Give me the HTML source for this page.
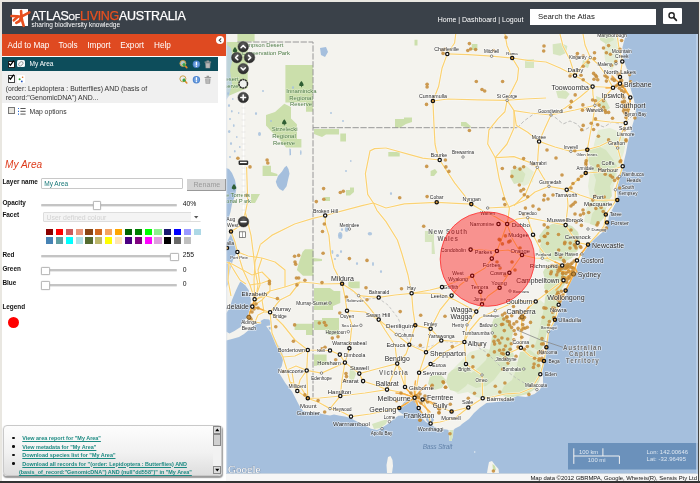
<!DOCTYPE html>
<html><head><meta charset="utf-8"><title>Atlas of Living Australia - Spatial Portal</title>
<style>
html,body{margin:0;padding:0}
body{width:700px;height:483px;overflow:hidden;position:relative;background:#e9e7e1;font-family:"Liberation Sans",sans-serif}
#wrap{position:absolute;left:0;top:0;width:700px;height:483px;transform:translateZ(0);will-change:transform}
.abs{position:absolute}
#hdr{left:2px;top:2px;width:696px;height:32px;background:#3a4149}
#nav{left:2px;top:34px;width:224.5px;height:22px;background:#df4a21}
#nav span{position:absolute;top:7.1px;font-size:8.2px;color:#fff;white-space:nowrap}
#panel{left:2px;top:56px;width:224px;height:425px;background:#fff}
.t{position:absolute;white-space:nowrap}
.lbl{font-weight:bold;font-size:6.4px;color:#111}
.track{position:absolute;height:2px;background:#c4c4c4;border-radius:1px;box-shadow:0 1px 0 #e8e8e8}
.hnd{position:absolute;width:6.5px;height:6.5px;background:#fff;border:0.8px solid #bbb;border-radius:1.5px;box-shadow:0 0 1px #999}
#sw i{position:absolute;width:7.2px;height:6.8px;display:block}
.lnk{position:absolute;font-size:5.45px;font-weight:bold;color:#1b8a82;text-decoration:underline;white-space:nowrap}
.bul{position:absolute;width:2.6px;height:2.6px;border-radius:50%;background:#111;left:12.4px}
</style></head><body><div id="wrap">
<div class="abs" id="hdr"></div>
<!-- logo -->
<div class="abs" style="left:11.5px;top:9px;width:16.5px;height:16.7px;background:#fff"></div>
<svg class="abs" style="left:0;top:0" width="40" height="34" viewBox="0 0 40 34"><g fill="none" stroke="#e8501f" stroke-width="2.6" stroke-linecap="round" stroke-linejoin="round"><path d="M21.1 11L21.4 16.7L29.4 12.3"/><path d="M21.4 16.7L17 16.3L11.5 16"/><path d="M17.8 16.8L13.8 20.3"/><path d="M21.4 16.7L19.6 21L16.3 22.9"/><path d="M21.4 16.7L22.5 22L23.7 25.8"/></g></svg>
<div class="t" style="left:31.5px;top:9.9px;font-size:12.5px;color:#fff;letter-spacing:-0.33px;line-height:13px;-webkit-text-stroke:0.25px #fff"><span>ATLAS</span><span style="font-size:8.2px;letter-spacing:0">OF</span><span style="color:#e8501f;-webkit-text-stroke:0.25px #e8501f">LIVING</span><span>AUSTRALIA</span></div>
<div class="t" style="left:31.5px;top:20.8px;font-size:6.5px;color:#fff;line-height:8px">sharing biodiversity knowledge</div>
<div class="t" style="left:437.7px;top:14.6px;font-size:7px;color:#fff;line-height:10px">Home | Dashboard | Logout</div>
<div class="abs" style="left:529.7px;top:8.6px;width:126.5px;height:16px;background:#fff"></div>
<div class="t" style="left:538px;top:11.8px;font-size:7.8px;color:#222;line-height:10px">Search the Atlas</div>
<div class="abs" style="left:663px;top:8.2px;width:19px;height:15.4px;background:#fff;border-radius:1px"></div>
<svg class="abs" style="left:667px;top:10.5px" width="12" height="12" viewBox="0 0 12 12"><circle cx="4.6" cy="4.4" r="2.6" fill="none" stroke="#222" stroke-width="1.4"/><path d="M6.6 6.4L9.4 9.4" stroke="#222" stroke-width="1.7" stroke-linecap="round"/></svg>

<div class="abs" id="nav"><span style="left:5.5px">Add to Map</span><span style="left:56.5px">Tools</span><span style="left:85.3px">Import</span><span style="left:118.3px">Export</span><span style="left:152px">Help</span></div>
<div class="abs" id="panel"></div>
<!-- collapse button -->
<div class="abs" style="left:215.6px;top:35.6px;width:8.6px;height:8.6px;border-radius:50%;background:#fff"></div>
<svg class="abs" style="left:215.6px;top:35.6px" width="9" height="9" viewBox="0 0 9 9"><path d="M5.2 2.4L3.2 4.3L5.2 6.2" fill="none" stroke="#444" stroke-width="1.1"/></svg>

<!-- layer rows -->
<div class="abs" style="left:2px;top:57px;width:216px;height:14px;background:#0d4d5b"></div>
<div class="abs" style="left:2px;top:71px;width:216px;height:32px;background:#f0f0f0"></div>
<div class="abs" style="left:7.6px;top:60.6px;width:5.6px;height:5.6px;background:#fff;border:0.8px solid #222"></div>
<svg class="abs" style="left:7px;top:59px" width="9" height="9" viewBox="0 0 9 9"><path d="M1.8 4.4L3.4 6.2L6.8 1.6" fill="none" stroke="#000" stroke-width="1.3"/></svg>
<div class="abs" style="left:17.4px;top:60px;width:7.4px;height:7.4px;background:#f4f8fa;border-radius:1.5px"></div>
<svg class="abs" style="left:17.4px;top:60px" width="8" height="8" viewBox="0 0 8 8"><ellipse cx="3.8" cy="3.8" rx="2.6" ry="1.7" transform="rotate(-45 3.8 3.8)" fill="none" stroke="#777" stroke-width="0.7"/></svg>
<div class="t" style="left:29.5px;top:60.2px;font-size:6.55px;color:#fff;line-height:8px">My Area</div>

<div class="abs" style="left:7.6px;top:75px;width:5.6px;height:5.6px;background:#fff;border:0.8px solid #444"></div>
<svg class="abs" style="left:7px;top:73.4px" width="9" height="9" viewBox="0 0 9 9"><path d="M1.8 4.4L3.4 6.2L6.8 1.6" fill="none" stroke="#000" stroke-width="1.3"/></svg>
<div class="abs" style="left:17.4px;top:75px;width:7.6px;height:8px;background:#fff;border-radius:1px"></div>
<svg class="abs" style="left:17.4px;top:75px" width="8" height="9" viewBox="0 0 8 9"><circle cx="2.6" cy="4.2" r="1" fill="#2a9d2a"/><circle cx="5.6" cy="2.2" r="0.8" fill="#e07020"/><circle cx="4.8" cy="6.4" r="0.9" fill="#2050c0"/></svg>
<div class="t" style="left:5.8px;top:85.3px;font-size:6.9px;color:#333;line-height:8.4px;white-space:normal;width:152px">(order: Lepidoptera : Butterflies) AND (basis of record:"GenomicDNA") AND...</div>

<svg class="abs" style="left:176px;top:57px" width="40" height="32" viewBox="0 0 40 32">
 <g id="ic">
 <circle cx="6.9" cy="6.4" r="3" fill="#e9edf0" fill-opacity="0.75" stroke="#c79a3c" stroke-width="0.9"/><path d="M9 8.6L10.8 10.6" stroke="#e08a2a" stroke-width="1.6" stroke-linecap="round"/><path d="M6.2 7.6L8.2 5.6L10 8.6L7.6 9.6Z" fill="#3aa544"/>
 <circle cx="20.4" cy="7.3" r="3.7" fill="#4d84cf"/><circle cx="20.4" cy="7.3" r="2.6" fill="#6fa0e0"/><rect x="19.8" y="4.8" width="1.2" height="3.4" fill="#fff"/><rect x="19.8" y="8.7" width="1.2" height="1.1" fill="#fff"/>
 <path d="M28.6 4.6H35.1V5.7H28.6ZM30.6 3.4H33.1V4.6H30.6ZM29.2 6.1H34.5L34.1 11.3H29.6Z" fill="#9a9a9a"/><path d="M30.8 6.6V10.8M31.85 6.6V10.8M32.9 6.6V10.8" stroke="#e4e4e4" stroke-width="0.5"/>
 </g>
 <use href="#ic" y="15.4"/>
</svg>

<!-- map options -->
<div class="abs" style="left:7.6px;top:106.6px;width:5.6px;height:5.6px;background:#e8e6e0;border:0.8px solid #777"></div>
<svg class="abs" style="left:17px;top:107px" width="10" height="9" viewBox="0 0 10 9"><path d="M1 1.5H2M1 4.3H2M1 7.1H2" stroke="#2a6ad0" stroke-width="1.2"/><path d="M3.4 1.5H8.6M3.4 4.3H8.6M3.4 7.1H8.6" stroke="#444" stroke-width="0.9"/></svg>
<div class="t" style="left:29.5px;top:107.8px;font-size:6.8px;color:#333;line-height:8px">Map options</div>

<!-- My Area heading -->
<div class="t" style="left:5px;top:158.6px;font-size:10.1px;font-style:italic;color:#dd3a1a;line-height:12px">My Area</div>
<div class="t lbl" style="left:2.4px;top:178.3px;line-height:8px">Layer name</div>
<div class="abs" style="left:41.4px;top:178.3px;width:142px;height:10.4px;border:0.8px solid #c8c8c8;background:#fff;box-sizing:border-box;border-radius:1px"></div>
<div class="t" style="left:44.2px;top:180.2px;font-size:6.55px;color:#187878;line-height:8px">My Area</div>
<div class="abs" style="left:187.3px;top:178.9px;width:38.5px;height:11.7px;background:#d4d4d4;border-right:1px solid #999;border-bottom:1px solid #999;box-sizing:border-box"></div>
<div class="t" style="left:193.5px;top:180.8px;font-size:7.1px;color:#9a9a9a;line-height:9px">Rename</div>
<div class="t lbl" style="left:2.4px;top:198.6px;line-height:8px">Opacity</div>
<div class="track" style="left:41.4px;top:203.8px;width:136px"></div>
<div class="hnd" style="left:92.6px;top:201px"></div>
<div class="t" style="left:182.7px;top:198.6px;font-size:6.8px;color:#111;line-height:9px">40%</div>
<div class="t lbl" style="left:2.4px;top:211.4px;line-height:8px">Facet</div>
<div class="abs" style="left:43.2px;top:211.5px;width:158px;height:10.8px;border:0.8px solid #ddd;background:#f4f4f4;box-sizing:border-box;border-radius:1px"></div>
<div class="abs" style="left:191px;top:212.3px;width:9.6px;height:9.2px;background:#fff"></div>
<svg class="abs" style="left:193px;top:214.6px" width="7" height="5" viewBox="0 0 7 5"><path d="M1 1L3.2 3.6L5.4 1Z" fill="#555"/></svg>
<div class="t" style="left:46.6px;top:212.6px;font-size:6.9px;color:#d2d2d2;line-height:9px">User defined colour</div>
<div id="sw"><i style="left:46.00px;top:228.6px;background:#8b0000"></i><i style="left:55.85px;top:228.6px;background:#ff0000"></i><i style="left:65.70px;top:228.6px;background:#cd5c5c"></i><i style="left:75.55px;top:228.6px;background:#e9967a"></i><i style="left:85.40px;top:228.6px;background:#8b4513"></i><i style="left:95.25px;top:228.6px;background:#d2691e"></i><i style="left:105.10px;top:228.6px;background:#f4a460"></i><i style="left:114.95px;top:228.6px;background:#ffa500"></i><i style="left:124.80px;top:228.6px;background:#006400"></i><i style="left:134.65px;top:228.6px;background:#008000"></i><i style="left:144.50px;top:228.6px;background:#00ff00"></i><i style="left:154.35px;top:228.6px;background:#90ee90"></i><i style="left:164.20px;top:228.6px;background:#191970"></i><i style="left:174.05px;top:228.6px;background:#0000ff"></i><i style="left:183.90px;top:228.6px;background:#9999ff"></i><i style="left:193.75px;top:228.6px;background:#add8e6"></i><i style="left:46.00px;top:236.8px;background:#4682b4"></i><i style="left:55.85px;top:236.8px;background:#5f9ea0"></i><i style="left:65.70px;top:236.8px;background:#00ffff"></i><i style="left:75.55px;top:236.8px;background:#b0e0e6"></i><i style="left:85.40px;top:236.8px;background:#556b2f"></i><i style="left:95.25px;top:236.8px;background:#bdb76b"></i><i style="left:105.10px;top:236.8px;background:#ffff00"></i><i style="left:114.95px;top:236.8px;background:#ffe4b5"></i><i style="left:124.80px;top:236.8px;background:#4b0082"></i><i style="left:134.65px;top:236.8px;background:#800080"></i><i style="left:144.50px;top:236.8px;background:#ff00ff"></i><i style="left:154.35px;top:236.8px;background:#dda0dd"></i><i style="left:164.20px;top:236.8px;background:#000000"></i><i style="left:174.05px;top:236.8px;background:#696969"></i><i style="left:183.90px;top:236.8px;background:#c0c0c0"></i></div>
<div class="t lbl" style="left:2.4px;top:250.8px;line-height:8px">Red</div>
<div class="track" style="left:41px;top:255.2px;width:136px"></div>
<div class="hnd" style="left:170.2px;top:252.6px"></div>
<div class="t" style="left:182.8px;top:250.2px;font-size:6.8px;color:#111;line-height:9px">255</div>
<div class="t lbl" style="left:2.4px;top:264.9px;line-height:8px">Green</div>
<div class="track" style="left:41px;top:269.4px;width:136px"></div>
<div class="hnd" style="left:41px;top:266.8px"></div>
<div class="t" style="left:182.8px;top:264.6px;font-size:6.8px;color:#111;line-height:9px">0</div>
<div class="t lbl" style="left:2.4px;top:279.4px;line-height:8px">Blue</div>
<div class="track" style="left:41px;top:283.8px;width:136px"></div>
<div class="hnd" style="left:41px;top:281.2px"></div>
<div class="t" style="left:182.8px;top:279px;font-size:6.8px;color:#111;line-height:9px">0</div>
<div class="t lbl" style="left:2.4px;top:302.6px;line-height:8px">Legend</div>
<div class="abs" style="left:8.1px;top:316.7px;width:11.2px;height:11.2px;border-radius:50%;background:#ff0000"></div>

<!-- links box -->
<div class="abs" style="left:2.7px;top:424.7px;width:219px;height:51px;border:0.8px solid #c9c9c9;border-radius:4px;box-sizing:border-box;background:linear-gradient(#fdfdfd,#f1f1f1 55%,#dedede);box-shadow:0.5px 1.2px 1.2px rgba(0,0,0,0.4)"></div>
<div class="bul" style="top:436.8px"></div><div class="bul" style="top:445.2px"></div><div class="bul" style="top:453.7px"></div><div class="bul" style="top:462.1px"></div>
<div class="lnk" style="left:22.3px;top:434.4px;line-height:8px">View area report for "My Area"</div>
<div class="lnk" style="left:22.3px;top:442.8px;line-height:8px">View metadata for "My Area"</div>
<div class="lnk" style="left:22.3px;top:451.2px;line-height:8px">Download species list for "My Area"</div>
<div class="lnk" style="left:22.3px;top:459.5px;line-height:8px">Download all records for "(order: Lepidoptera : Butterflies) AND</div>
<div class="lnk" style="left:18.9px;top:467.9px;line-height:8px">(basis_of_record:"GenomicDNA") AND (null"dd558")" in "My Area"</div>
<!-- scrollbar -->
<div class="abs" style="left:212.5px;top:425.7px;width:8.6px;height:48.8px;background:#f2f2f2"></div>
<div class="abs" style="left:212.5px;top:425.7px;width:8.6px;height:8.2px;background:#dcdcdc;border:0.6px solid #888;box-sizing:border-box"></div>
<svg class="abs" style="left:212.5px;top:425.7px" width="9" height="8" viewBox="0 0 9 8"><path d="M2.2 5.2L4.3 2.6L6.4 5.2Z" fill="#000"/></svg>
<div class="abs" style="left:212.5px;top:434px;width:8.6px;height:12px;background:#d0d0d0;border:0.6px solid #888;box-sizing:border-box"></div>
<div class="abs" style="left:212.5px;top:466.3px;width:8.6px;height:8.2px;background:#dcdcdc;border:0.6px solid #888;box-sizing:border-box"></div>
<svg class="abs" style="left:212.5px;top:466.3px" width="9" height="8" viewBox="0 0 9 8"><path d="M2.2 2.8L4.3 5.4L6.4 2.8Z" fill="#000"/></svg>

<svg id="map" width="700" height="483" viewBox="0 0 700 483" style="position:absolute;left:0;top:0">
<defs><clipPath id="mc"><rect x="226" y="34" width="472" height="439.6"/></clipPath><radialGradient id="btn" cx="50%" cy="35%" r="65%"><stop offset="0" stop-color="#666"/><stop offset="1" stop-color="#222"/></radialGradient></defs>
<g clip-path="url(#mc)">
<rect x="226" y="34" width="472" height="440" fill="#a5bfdd"/>
<polygon points="226.0,34.0 626.0,34.0 622.5,47.0 623.0,56.0 625.0,64.0 628.5,73.0 629.0,82.0 631.0,90.0 633.6,98.0 636.0,110.0 634.5,118.0 632.0,127.0 629.5,136.0 627.6,144.0 626.0,153.0 624.0,161.0 623.0,167.0 619.0,179.0 617.0,190.0 618.0,198.6 613.6,207.0 609.0,216.0 607.6,224.0 604.0,231.0 595.6,238.0 588.7,243.0 585.0,250.0 581.0,259.0 576.7,267.0 575.6,272.0 572.0,278.6 568.0,287.0 566.0,296.0 562.0,301.0 560.0,309.0 556.7,317.0 553.0,322.0 550.0,330.0 547.0,339.0 546.4,347.0 544.8,352.0 544.0,358.6 542.0,367.0 543.0,376.0 543.0,384.0 539.7,390.0 534.5,394.0 526.0,397.0 517.0,396.0 508.7,400.0 496.7,402.0 486.4,403.0 479.5,408.0 474.0,413.0 469.0,419.0 462.0,424.0 460.0,426.0 455.0,428.5 453.5,430.0 453.0,436.0 451.5,441.0 449.5,441.0 449.0,435.0 448.5,430.0 446.5,429.5 438.0,428.7 431.0,425.0 426.0,422.0 423.0,419.0 420.0,417.0 417.0,418.5 413.0,419.0 410.5,418.0 414.0,414.0 417.0,409.0 416.0,403.0 412.0,399.0 408.0,399.0 404.0,402.5 400.0,407.0 398.0,411.0 401.0,413.0 405.0,415.5 398.4,415.8 395.0,418.0 391.5,421.0 387.0,424.5 383.0,427.0 377.0,430.0 371.0,428.7 366.0,426.0 360.6,423.5 355.0,420.5 350.0,418.0 345.0,416.5 340.0,415.8 334.0,414.5 330.0,415.5 327.0,415.0 322.0,414.0 317.0,412.5 310.0,412.0 303.0,411.0 299.0,405.0 296.4,400.0 292.0,391.5 285.3,383.0 281.0,376.0 278.4,372.0 281.8,366.0 283.6,357.0 281.0,348.6 278.0,345.0 275.4,339.7 270.4,332.0 265.5,325.0 261.0,323.0 256.8,324.0 250.0,329.0 244.0,334.0 239.0,337.0 232.0,339.0 226.0,340.5 226.0,331.5 229.5,333.5 234.4,331.0 240.6,327.0 243.0,322.0 248.0,316.0 250.0,308.6 251.0,300.0 248.7,290.0 245.0,285.0 240.6,281.0 238.0,286.0 235.7,291.0 232.0,300.0 229.5,308.6 226.0,313.6" fill="#f4f3ee"/>
<polygon points="388.0,457.0 390.5,456.0 392.5,460.0 393.0,466.0 392.0,473.0 387.0,473.0 386.5,465.0" fill="#f4f3ee"/>
<polygon points="489.0,462.0 492.0,461.0 495.0,465.0 498.5,469.0 499.0,473.0 487.0,473.0 488.0,467.0" fill="#f4f3ee"/>
<polygon points="492.5,464.0 495.0,466.0 496.0,470.0 493.0,471.0" fill="#cbdfab"/>
<circle cx="474.7" cy="452" r="0.8" fill="#e8eef2"/>
<polygon points="414.6,398.5 417.0,402.0 419.0,407.4 421.5,411.0 423.7,415.4 419.0,418.0 413.4,418.4 410.0,418.5 407.7,416.6 405.0,414.0 401.0,412.5 399.5,410.0 402.0,408.5 404.3,409.7 406.5,406.0 408.9,402.9 411.5,400.0" fill="#a5bfdd"/>
<polygon points="426.0,416.0 429.0,415.0 432.5,417.0 434.0,420.0 432.0,423.0 428.0,422.5 426.0,420.0" fill="#a5bfdd"/>
<polygon points="428.5,417.5 431.0,418.0 431.5,420.5 429.0,420.5" fill="#f4f3ee"/>
<polygon points="231.5,233.0 233.0,236.0 235.0,242.0 236.5,248.0 236.0,254.0 233.0,260.0 230.5,268.0 229.0,276.0 228.0,284.0 226.0,288.0 226.0,244.0 228.0,240.0 230.0,236.0" fill="#a5bfdd"/>
<polygon points="470.0,352.0 484.0,348.0 496.0,352.0 506.0,360.0 520.0,362.0 534.0,360.0 541.0,368.0 540.0,380.0 534.0,390.0 522.0,395.0 508.0,397.0 496.0,395.0 486.0,399.0 476.0,397.0 468.0,392.0 458.0,394.0 450.0,388.0 448.0,378.0 454.0,368.0 462.0,360.0" fill="#e4edd6"/>
<polygon points="598.0,130.0 610.0,128.0 620.0,132.0 626.0,140.0 624.0,152.0 620.0,164.0 616.0,178.0 612.0,192.0 608.0,206.0 600.0,216.0 592.0,224.0 584.0,222.0 586.0,210.0 590.0,198.0 588.0,186.0 590.0,172.0 592.0,158.0 594.0,144.0" fill="#e4edd6"/>
<polygon points="606.0,36.0 616.0,36.0 620.0,48.0 618.0,60.0 612.0,70.0 606.0,66.0 604.0,52.0" fill="#e4edd6"/>
<polygon points="515.5,167.0 526.0,166.0 534.0,172.0 533.0,182.0 524.0,186.0 516.0,182.0" fill="#e4edd6"/>
<polygon points="528.0,302.0 540.0,300.0 548.0,306.0 548.0,322.0 544.0,340.0 540.0,356.0 532.0,362.0 526.0,352.0 530.0,336.0 530.0,318.0" fill="#e4edd6"/>
<polygon points="552.6,44.3 561.0,43.0 567.4,46.0 566.0,53.0 560.0,55.7 553.0,54.0" fill="#d6e5bf"/>
<polygon points="556.0,91.0 565.0,90.0 569.7,94.0 566.0,99.0 558.0,98.0" fill="#d6e5bf"/>
<polygon points="600.0,34.0 612.0,34.0 614.0,40.0 606.0,44.0 600.0,40.0" fill="#d6e5bf"/>
<polygon points="583.0,60.0 590.0,62.0 588.0,68.0 582.0,66.0" fill="#d6e5bf"/>
<polygon points="596.0,96.0 606.0,100.0 610.0,108.0 604.0,112.0 598.0,106.0" fill="#d6e5bf"/>
<polygon points="590.0,150.0 598.0,146.0 606.0,150.0 612.0,158.0 617.0,166.0 615.0,176.0 610.0,186.0 612.0,196.0 606.0,204.0 598.0,200.0 594.0,190.0 596.0,180.0 592.0,170.0 588.0,160.0" fill="#d6e5bf"/>
<polygon points="598.0,206.0 606.0,208.0 604.0,218.0 596.0,226.0 590.0,224.0 592.0,214.0" fill="#d6e5bf"/>
<polygon points="510.6,170.0 520.0,168.0 525.4,174.0 523.0,182.0 514.0,184.0 510.6,178.0" fill="#d6e5bf"/>
<polygon points="545.0,228.0 552.0,224.0 562.0,223.0 572.0,226.0 578.0,232.0 580.0,240.0 578.0,250.0 572.0,258.0 564.0,262.0 556.0,260.0 548.0,262.0 541.0,258.0 539.0,250.0 541.0,242.0 539.0,236.0" fill="#d6e5bf"/>
<polygon points="547.0,265.0 556.0,264.0 563.0,268.0 567.0,276.0 565.0,284.0 560.0,292.0 554.0,296.0 548.0,294.0 544.0,288.0 545.0,280.0 543.0,272.0" fill="#d6e5bf"/>
<polygon points="548.0,288.0 556.0,290.0 560.0,300.0 556.0,312.0 551.0,322.0 547.0,332.0 544.0,344.0 540.0,352.0 534.0,348.0 538.0,336.0 541.0,322.0 544.0,308.0 545.0,298.0" fill="#d6e5bf"/>
<polygon points="494.0,318.0 503.0,316.0 510.0,322.0 513.0,332.0 511.0,344.0 514.0,356.0 508.0,366.0 500.0,372.0 494.0,380.0 486.0,386.0 476.0,388.0 468.0,384.0 470.0,374.0 478.0,368.0 486.0,360.0 490.0,348.0 492.0,336.0 491.0,326.0" fill="#d6e5bf"/>
<polygon points="520.0,352.0 530.0,350.0 538.0,356.0 541.0,366.0 540.0,378.0 536.0,388.0 528.0,394.0 518.0,396.0 508.0,398.0 500.0,394.0 504.0,386.0 512.0,380.0 516.0,370.0 518.0,360.0" fill="#d6e5bf"/>
<polygon points="452.0,370.0 462.0,366.0 470.0,370.0 472.0,378.0 466.0,386.0 458.0,392.0 450.0,390.0 446.0,382.0 448.0,374.0" fill="#d6e5bf"/>
<polygon points="430.0,376.0 440.0,374.0 446.0,380.0 442.0,388.0 434.0,390.0 428.0,384.0" fill="#d6e5bf"/>
<polygon points="350.0,368.0 354.0,366.0 356.0,374.0 353.0,382.0 349.0,378.0" fill="#d6e5bf"/>
<polygon points="372.0,424.0 381.0,421.0 388.0,419.0 386.0,424.0 380.0,428.0 374.0,429.0" fill="#d6e5bf"/>
<polygon points="424.9,231.0 434.0,231.0 434.0,242.0 435.0,254.0 431.7,254.0 431.7,242.0 424.9,242.0" fill="#d6e5bf"/>
<polygon points="449.5,430.0 453.0,430.0 453.0,436.0 451.5,441.0 449.5,441.0" fill="#d6e5bf"/>
<polygon points="525.0,59.0 534.0,59.0 534.0,68.0 525.0,68.0" fill="#d6e5bf"/>
<polygon points="237.4,34.0 254.6,34.0 254.6,41.5 237.4,41.5" fill="#cbdfab"/>
<polygon points="226.0,42.0 247.7,42.0 247.7,88.0 240.0,91.0 233.0,94.0 226.0,97.0" fill="#cbdfab"/>
<polygon points="285.4,65.0 312.9,65.0 312.9,111.7 306.0,111.7 306.0,102.6 285.4,102.6" fill="#cbdfab"/>
<polygon points="266.0,115.0 275.0,112.0 284.3,103.7 291.0,107.0 291.0,118.6 296.9,124.3 297.0,139.0 301.4,139.0 301.4,147.5 286.0,147.5 280.0,140.0 272.0,132.0 266.0,125.4" fill="#cbdfab"/>
<polygon points="314.0,129.0 339.0,129.0 339.0,134.6 326.0,134.6 322.0,137.0 314.0,134.0" fill="#cbdfab"/>
<polygon points="340.3,133.4 346.0,133.4 346.0,141.4 340.3,141.4" fill="#cbdfab"/>
<polygon points="395.0,119.0 404.0,119.0 404.0,117.4 412.0,117.4 412.0,122.0 406.0,124.0 400.0,127.7 395.0,127.7" fill="#cbdfab"/>
<polygon points="461.0,122.0 466.0,122.0 470.6,126.0 470.6,128.0 461.0,126.0" fill="#cbdfab"/>
<polygon points="471.7,44.0 477.4,44.0 477.4,50.0 471.7,50.0" fill="#cbdfab"/>
<polygon points="414.5,39.7 417.5,39.7 417.5,45.4 414.5,45.4" fill="#cbdfab"/>
<polygon points="262.6,165.7 271.0,165.7 271.0,172.0 277.4,174.0 277.4,176.0 262.6,176.0" fill="#cbdfab"/>
<polygon points="251.0,194.0 260.0,194.0 255.0,203.0 251.0,203.0" fill="#cbdfab"/>
<polygon points="346.0,190.0 350.0,190.0 350.0,187.4 354.0,187.4 354.0,192.0 350.0,195.4 346.0,195.4" fill="#cbdfab"/>
<polygon points="324.3,197.0 330.0,197.0 330.0,201.0 324.3,201.0" fill="#cbdfab"/>
<polygon points="388.3,152.0 399.7,152.0 399.7,156.6 388.3,156.6" fill="#cbdfab"/>
<polygon points="430.6,171.0 435.0,169.0 437.4,172.0 434.0,176.0 430.6,176.0" fill="#cbdfab"/>
<polygon points="305.0,249.3 313.4,249.3 313.4,258.0 322.0,259.0 322.0,261.0 313.4,261.5 313.4,275.7 303.0,275.7 296.9,270.0 299.0,262.0 302.5,252.0" fill="#cbdfab"/>
<polygon points="314.0,288.0 330.0,288.0 334.0,291.0 340.3,291.0 340.3,303.0 333.0,306.0 333.0,310.0 314.0,310.0" fill="#cbdfab"/>
<polygon points="294.6,323.7 312.9,323.7 312.9,335.1 306.0,335.1 306.0,330.0 294.6,330.0" fill="#cbdfab"/>
<polygon points="314.0,320.0 322.0,320.0 322.0,318.0 339.0,318.0 339.0,335.0 328.0,335.0 325.0,330.0 314.0,330.0" fill="#cbdfab"/>
<polygon points="348.3,281.4 359.7,281.4 359.7,288.3 348.3,288.3" fill="#cbdfab"/>
<polygon points="314.0,354.6 326.6,354.6 326.6,361.0 332.0,364.0 314.0,366.0" fill="#cbdfab"/>
<polygon points="260.5,321.0 264.0,319.0 269.0,319.5 271.7,322.0 270.0,325.5 266.0,326.0 262.0,324.5" fill="#a5bfdd"/>
<polygon points="268.5,327.0 271.0,327.0 271.0,329.5 269.0,329.5" fill="#a5bfdd"/>
<polygon points="226.0,168.0 229.0,169.0 232.0,173.0 235.0,180.0 236.5,188.0 235.0,196.0 232.0,204.0 230.5,212.0 228.0,220.0 226.0,224.0" fill="#a5bfdd"/>
<polygon points="286.6,165.7 288.5,169.0 289.5,173.7 288.0,180.0 286.6,186.3 283.0,190.9 279.5,189.0 277.4,186.3 275.8,181.7 278.0,176.0 282.0,171.4 284.5,167.5" fill="#a5bfdd"/>
<polygon points="289.4,148.6 290.8,149.0 291.0,155.0 289.6,155.4" fill="#a5bfdd"/>
<polygon points="320.0,48.0 326.0,47.0 328.0,52.0 325.0,57.0 321.0,55.0" fill="#a5bfdd"/>
<polygon points="226.0,44.0 231.0,48.0 233.0,58.0 230.0,70.0 232.0,84.0 229.0,96.0 226.0,100.0" fill="#b9cfe6" opacity="0.8"/>
<ellipse cx="340.2" cy="235.5" rx="2.2" ry="3.5" fill="#a5bfdd" opacity="0.85"/>
<ellipse cx="346.6" cy="229.0" rx="1.8" ry="3.0" fill="#a5bfdd" opacity="0.85"/>
<ellipse cx="369.9" cy="233.8" rx="2.2" ry="1.8" fill="#a5bfdd" opacity="0.85"/>
<ellipse cx="293.0" cy="87.5" rx="1.0" ry="1.5" fill="#a5bfdd" opacity="0.85"/>
<ellipse cx="263.0" cy="91.0" rx="1.0" ry="1.0" fill="#a5bfdd" opacity="0.85"/>
<ellipse cx="256.0" cy="113.5" rx="1.0" ry="1.5" fill="#a5bfdd" opacity="0.85"/>
<ellipse cx="271.0" cy="121.0" rx="1.0" ry="1.0" fill="#a5bfdd" opacity="0.85"/>
<ellipse cx="300.8" cy="152.5" rx="0.8" ry="2.5" fill="#a5bfdd" opacity="0.85"/>
<ellipse cx="346.0" cy="171.0" rx="1.0" ry="1.0" fill="#a5bfdd" opacity="0.85"/>
<ellipse cx="350.8" cy="161.0" rx="0.8" ry="1.0" fill="#a5bfdd" opacity="0.85"/>
<ellipse cx="373.0" cy="264.0" rx="1.0" ry="2.0" fill="#a5bfdd" opacity="0.85"/>
<ellipse cx="381.0" cy="271.5" rx="1.0" ry="1.5" fill="#a5bfdd" opacity="0.85"/>
<ellipse cx="357.0" cy="263.5" rx="1.0" ry="1.5" fill="#a5bfdd" opacity="0.85"/>
<ellipse cx="391.0" cy="193.5" rx="1.0" ry="1.5" fill="#a5bfdd" opacity="0.85"/>
<ellipse cx="343.0" cy="121.0" rx="1.0" ry="1.0" fill="#a5bfdd" opacity="0.85"/>
<ellipse cx="331.0" cy="113.0" rx="1.0" ry="1.0" fill="#a5bfdd" opacity="0.85"/>
<ellipse cx="259.5" cy="134.0" rx="1.5" ry="2.0" fill="#a5bfdd" opacity="0.85"/>
<ellipse cx="229.0" cy="105.5" rx="1.0" ry="1.5" fill="#a5bfdd" opacity="0.85"/>
<ellipse cx="231.8" cy="111.2" rx="0.8" ry="1.2" fill="#a5bfdd" opacity="0.85"/>
<ellipse cx="230.0" cy="119.0" rx="1.0" ry="1.0" fill="#a5bfdd" opacity="0.85"/>
<ellipse cx="233.8" cy="125.5" rx="0.8" ry="1.5" fill="#a5bfdd" opacity="0.85"/>
<ellipse cx="229.2" cy="131.5" rx="1.2" ry="1.5" fill="#a5bfdd" opacity="0.85"/>
<ellipse cx="236.8" cy="137.0" rx="0.8" ry="1.0" fill="#a5bfdd" opacity="0.85"/>
<ellipse cx="231.0" cy="143.5" rx="1.0" ry="1.5" fill="#a5bfdd" opacity="0.85"/>
<ellipse cx="234.8" cy="151.2" rx="0.8" ry="1.2" fill="#a5bfdd" opacity="0.85"/>
<ellipse cx="230.0" cy="157.0" rx="1.0" ry="1.0" fill="#a5bfdd" opacity="0.85"/>
<ellipse cx="238.7" cy="113.0" rx="0.7" ry="1.0" fill="#a5bfdd" opacity="0.85"/>
<ellipse cx="239.8" cy="147.0" rx="0.8" ry="1.0" fill="#a5bfdd" opacity="0.85"/>
<ellipse cx="228.0" cy="93.5" rx="1.0" ry="1.5" fill="#a5bfdd" opacity="0.85"/>
<ellipse cx="232.8" cy="99.0" rx="0.8" ry="1.0" fill="#a5bfdd" opacity="0.85"/>
<ellipse cx="332.2" cy="252.0" rx="1.2" ry="2.0" fill="#a5bfdd" opacity="0.85"/>
<ellipse cx="337.5" cy="255.5" rx="1.5" ry="1.5" fill="#a5bfdd" opacity="0.85"/>
<ellipse cx="341.0" cy="251.5" rx="1.0" ry="1.5" fill="#a5bfdd" opacity="0.85"/>
<ellipse cx="335.0" cy="259.0" rx="1.0" ry="1.0" fill="#a5bfdd" opacity="0.85"/>
<ellipse cx="340.2" cy="235.5" rx="1.2" ry="1.5" fill="#a5bfdd" opacity="0.85"/>
<ellipse cx="342.0" cy="229.5" rx="1.0" ry="1.5" fill="#a5bfdd" opacity="0.85"/>
<path d="M237.4 42H313V400" fill="none" stroke="#8c8c8c" stroke-width="0.9" stroke-dasharray="6.3,1.6"/>
<path d="M313 127.7H517.4" fill="none" stroke="#8c8c8c" stroke-width="0.9" stroke-dasharray="6.3,1.6"/>
<path d="M517.4 127.7L524 121L532.3 115L540 112L548 113L556 118L563 124L570 121L577 124L583 131L588 128L596 124L604 127L612 122L620 124L628 120L636 112" fill="none" stroke="#a8a8a8" stroke-width="0.7" stroke-dasharray="3.5,2"/>
<path d="M342 284L352 291L358 296L368 299L378 298L388 305L398 318L404 332L410 344L420 348L432 346L442 341L455 343L464 342L474 345L486 352L500 366L516 378L536 390" fill="none" stroke="#b5b5b5" stroke-width="0.7" stroke-dasharray="3,2"/>
<polyline points="455.7,34.0 454.6,43.0 447.3,53.9 442.0,68.3 438.6,86.6 432.9,101.0 434.0,125.4 435.0,144.0 436.3,150.0 439.7,160.0" fill="none" stroke="#ffffff" stroke-width="2.2" stroke-linejoin="round" opacity="0.7"/>
<polyline points="447.3,53.9 468.3,54.6 491.6,56.2 512.2,58.0 527.7,60.3 546.0,62.0 560.0,68.0 575.0,75.6 583.0,80.0 592.6,86.6" fill="none" stroke="#ffffff" stroke-width="2.2" stroke-linejoin="round" opacity="0.7"/>
<polyline points="432.9,101.0 447.7,99.0 477.4,99.8 507.1,100.3 525.0,99.0 546.0,98.0" fill="none" stroke="#ffffff" stroke-width="2.2" stroke-linejoin="round" opacity="0.7"/>
<polyline points="504.9,34.0 507.0,45.4 512.2,58.0 518.6,68.3 517.4,79.7 507.1,100.3 504.9,111.7 498.0,118.6 488.9,130.0 487.7,144.0 495.3,157.7" fill="none" stroke="#ffffff" stroke-width="2.2" stroke-linejoin="round" opacity="0.7"/>
<polyline points="507.1,100.3 514.0,110.6 530.0,113.0 551.0,115.0" fill="none" stroke="#ffffff" stroke-width="2.2" stroke-linejoin="round" opacity="0.7"/>
<polyline points="514.0,110.6 516.3,125.4 527.7,132.3 539.1,141.4" fill="none" stroke="#ffffff" stroke-width="2.2" stroke-linejoin="round" opacity="0.7"/>
<polyline points="592.6,86.6 603.0,87.0 613.0,87.7 620.0,83.6" fill="none" stroke="#ffffff" stroke-width="2.2" stroke-linejoin="round" opacity="0.7"/>
<polyline points="592.6,86.6 580.0,97.0 565.0,108.0 551.0,115.0 545.0,128.0 539.1,141.4" fill="none" stroke="#ffffff" stroke-width="2.2" stroke-linejoin="round" opacity="0.7"/>
<polyline points="613.0,87.7 605.0,97.0 594.9,105.3 575.0,110.0 551.0,115.0" fill="none" stroke="#ffffff" stroke-width="2.2" stroke-linejoin="round" opacity="0.7"/>
<polyline points="592.6,86.6 593.0,95.0 594.9,105.3 593.0,120.0 590.0,135.0 587.3,149.7 587.0,160.0 585.7,173.0 575.0,182.0 566.7,189.7" fill="none" stroke="#ffffff" stroke-width="2.2" stroke-linejoin="round" opacity="0.7"/>
<polyline points="613.0,87.7 606.0,75.0 598.0,64.0 590.3,57.5 585.0,45.0 583.0,34.0" fill="none" stroke="#ffffff" stroke-width="2.2" stroke-linejoin="round" opacity="0.7"/>
<polyline points="575.0,75.6 583.0,65.0 590.3,57.5" fill="none" stroke="#ffffff" stroke-width="2.2" stroke-linejoin="round" opacity="0.7"/>
<polyline points="575.0,75.6 570.0,60.0 563.0,46.0 560.0,34.0" fill="none" stroke="#ffffff" stroke-width="2.2" stroke-linejoin="round" opacity="0.7"/>
<polyline points="617.0,34.0 619.0,48.0 622.3,61.4 620.0,77.0 620.0,83.6 626.0,90.0 630.3,97.5 629.0,110.0 625.7,123.0 621.0,135.0 617.7,148.0 622.7,166.2 619.5,176.5 615.4,189.7 615.0,202.0 605.8,214.4 604.0,226.0 597.0,235.0 588.0,244.6 577.0,260.4 573.6,274.0" fill="none" stroke="#ffffff" stroke-width="2.2" stroke-linejoin="round" opacity="0.7"/>
<polyline points="625.7,123.0 610.0,122.0 593.0,120.0" fill="none" stroke="#ffffff" stroke-width="2.2" stroke-linejoin="round" opacity="0.7"/>
<polyline points="539.1,141.4 555.0,147.0 570.9,151.3 587.3,149.7 600.0,146.0 610.0,141.0 617.7,148.0" fill="none" stroke="#ffffff" stroke-width="2.2" stroke-linejoin="round" opacity="0.7"/>
<polyline points="539.1,141.4 538.0,155.0 537.3,167.3 543.0,177.0 549.0,186.3 566.7,189.7" fill="none" stroke="#ffffff" stroke-width="2.2" stroke-linejoin="round" opacity="0.7"/>
<polyline points="585.7,173.0 600.0,172.0 612.0,170.0 622.7,166.2" fill="none" stroke="#ffffff" stroke-width="2.2" stroke-linejoin="round" opacity="0.7"/>
<polyline points="566.7,189.7 580.0,195.0 595.0,200.0 617.3,200.0" fill="none" stroke="#ffffff" stroke-width="2.2" stroke-linejoin="round" opacity="0.7"/>
<polyline points="566.7,189.7 568.0,205.0 565.6,225.1 572.0,235.0 577.7,242.7 588.0,244.6" fill="none" stroke="#ffffff" stroke-width="2.2" stroke-linejoin="round" opacity="0.7"/>
<polyline points="260.3,244.6 271.7,235.4 294.6,224.0 312.9,218.3 325.2,215.5 340.3,211.4 363.0,205.3 373.4,203.0 386.0,208.0 404.3,203.9 436.7,202.3 471.3,204.1" fill="none" stroke="#ffffff" stroke-width="2.2" stroke-linejoin="round" opacity="0.7"/>
<polyline points="386.0,148.0 374.6,148.6 370.0,150.9 365.4,173.7 367.7,194.3 373.4,203.0 376.9,210.3 386.0,221.7 397.4,240.0 402.0,254.0 408.0,275.0 411.6,293.3" fill="none" stroke="#ffffff" stroke-width="2.2" stroke-linejoin="round" opacity="0.7"/>
<polyline points="386.0,148.0 408.9,154.3 422.6,158.2 439.7,160.0" fill="none" stroke="#ffffff" stroke-width="2.2" stroke-linejoin="round" opacity="0.7"/>
<polyline points="495.3,157.7 514.0,156.6 532.3,163.4 537.3,167.3" fill="none" stroke="#ffffff" stroke-width="2.2" stroke-linejoin="round" opacity="0.7"/>
<polyline points="439.7,160.0 454.6,182.9 471.3,204.1 482.0,210.3 495.7,217.0 507.1,224.0" fill="none" stroke="#ffffff" stroke-width="2.2" stroke-linejoin="round" opacity="0.7"/>
<polyline points="495.3,157.7 499.1,178.3 504.9,198.9 509.4,208.0 508.3,217.0 507.1,224.0" fill="none" stroke="#ffffff" stroke-width="2.2" stroke-linejoin="round" opacity="0.7"/>
<polyline points="495.3,157.7 507.0,144.0 514.0,128.0 514.0,110.6" fill="none" stroke="#ffffff" stroke-width="2.2" stroke-linejoin="round" opacity="0.7"/>
<polyline points="487.7,208.0 509.4,206.9 525.0,200.0 535.0,192.0 549.0,186.3" fill="none" stroke="#ffffff" stroke-width="2.2" stroke-linejoin="round" opacity="0.7"/>
<polyline points="537.3,167.3 532.3,178.3 525.4,194.3 514.0,205.7" fill="none" stroke="#ffffff" stroke-width="2.2" stroke-linejoin="round" opacity="0.7"/>
<polyline points="507.1,224.0 517.0,219.0 527.7,217.6 545.0,221.0 565.6,225.1" fill="none" stroke="#ffffff" stroke-width="2.2" stroke-linejoin="round" opacity="0.7"/>
<polyline points="527.7,217.6 533.0,234.7 540.0,248.0 548.0,258.5" fill="none" stroke="#ffffff" stroke-width="2.2" stroke-linejoin="round" opacity="0.7"/>
<polyline points="507.1,224.0 512.0,238.0 522.0,255.0 535.0,258.0 548.0,258.5 562.2,265.4 573.6,274.0" fill="none" stroke="#ffffff" stroke-width="2.2" stroke-linejoin="round" opacity="0.7"/>
<polyline points="325.2,215.5 325.4,224.0 328.9,235.4 330.7,254.0 334.0,268.0 342.1,283.7" fill="none" stroke="#ffffff" stroke-width="2.2" stroke-linejoin="round" opacity="0.7"/>
<polyline points="342.1,283.7 320.0,284.0 313.0,283.0 300.0,282.0 285.0,287.0 270.0,291.0 258.0,298.0 252.3,306.6" fill="none" stroke="#ffffff" stroke-width="2.2" stroke-linejoin="round" opacity="0.7"/>
<polyline points="342.1,283.7 345.0,297.0 347.0,310.7 352.0,325.0 349.4,348.2 344.9,362.6" fill="none" stroke="#ffffff" stroke-width="2.2" stroke-linejoin="round" opacity="0.7"/>
<polyline points="342.1,283.7 352.0,290.0 358.6,295.6 378.7,297.4 395.0,295.0 411.6,293.3 430.0,290.0 442.0,287.1 455.0,282.0 472.2,275.7 485.0,268.0 491.8,258.6 496.9,251.0 502.0,238.0 507.1,224.0" fill="none" stroke="#ffffff" stroke-width="2.2" stroke-linejoin="round" opacity="0.7"/>
<polyline points="411.6,293.3 413.0,310.0 415.3,325.3 412.0,336.0 409.3,344.7 406.0,354.0 397.2,363.6 405.0,375.0 405.0,386.9 414.6,397.8" fill="none" stroke="#ffffff" stroke-width="2.2" stroke-linejoin="round" opacity="0.7"/>
<polyline points="414.6,397.8 417.0,385.0 419.1,372.7 430.6,364.0 445.0,352.0 464.4,342.0 470.0,330.0 480.0,318.0 495.3,310.5 510.0,304.0 522.0,301.0 535.7,301.5 548.0,292.0 563.5,280.3 573.6,274.0" fill="none" stroke="#ffffff" stroke-width="2.2" stroke-linejoin="round" opacity="0.7"/>
<polyline points="419.1,372.7 426.0,352.3 430.6,328.7 440.0,310.0 451.6,295.6 460.0,285.0 472.2,275.7" fill="none" stroke="#ffffff" stroke-width="2.2" stroke-linejoin="round" opacity="0.7"/>
<polyline points="522.0,255.0 508.0,250.0 496.9,251.0 484.0,250.0 470.6,249.6" fill="none" stroke="#ffffff" stroke-width="2.2" stroke-linejoin="round" opacity="0.7"/>
<polyline points="499.6,287.8 509.4,272.7 522.0,255.0" fill="none" stroke="#ffffff" stroke-width="2.2" stroke-linejoin="round" opacity="0.7"/>
<polyline points="476.3,311.6 455.0,300.0 440.0,294.0 425.0,293.0 411.6,293.3" fill="none" stroke="#ffffff" stroke-width="2.2" stroke-linejoin="round" opacity="0.7"/>
<polyline points="464.4,342.0 467.0,324.9 476.3,311.6 482.0,304.3 488.0,296.0 499.6,287.8" fill="none" stroke="#ffffff" stroke-width="2.2" stroke-linejoin="round" opacity="0.7"/>
<polyline points="482.0,304.3 480.4,291.7 472.2,275.7" fill="none" stroke="#ffffff" stroke-width="2.2" stroke-linejoin="round" opacity="0.7"/>
<polyline points="522.0,316.9 528.0,308.0 535.7,301.5" fill="none" stroke="#ffffff" stroke-width="2.2" stroke-linejoin="round" opacity="0.7"/>
<polyline points="522.0,316.9 521.0,332.0 520.9,347.7 530.0,356.0 544.0,361.0" fill="none" stroke="#ffffff" stroke-width="2.2" stroke-linejoin="round" opacity="0.7"/>
<polyline points="520.9,347.7 507.8,353.4" fill="none" stroke="#ffffff" stroke-width="2.2" stroke-linejoin="round" opacity="0.7"/>
<polyline points="573.6,274.0 565.6,290.6 558.7,304.7 554.9,319.8 548.5,331.7 546.4,347.3 544.0,361.0 540.3,374.3 532.0,388.0 520.0,393.0 505.0,394.0 492.0,397.0 482.7,398.3 468.3,407.4 451.6,411.5 436.0,406.0 422.6,399.4 414.6,397.8" fill="none" stroke="#ffffff" stroke-width="2.2" stroke-linejoin="round" opacity="0.7"/>
<polyline points="414.6,397.8 407.0,403.0 399.3,407.9 385.0,411.0 370.0,414.0 351.0,416.6 340.0,411.0 330.0,408.6 318.0,402.0 307.8,398.3 297.3,391.0 290.0,382.0 287.0,370.0 283.0,357.0 277.0,345.0 272.0,333.0 270.1,312.3 260.0,309.0 252.3,306.6" fill="none" stroke="#ffffff" stroke-width="2.2" stroke-linejoin="round" opacity="0.7"/>
<polyline points="414.6,397.8 400.0,392.0 387.0,389.6 375.0,385.0 363.1,381.1 359.3,373.6 344.9,362.6 339.8,354.6 330.0,350.5 307.8,350.0 295.0,340.0 283.0,325.0 270.1,312.3" fill="none" stroke="#ffffff" stroke-width="2.2" stroke-linejoin="round" opacity="0.7"/>
<polyline points="405.0,386.9 397.2,363.6 395.0,345.0 385.0,330.0 378.7,319.6 365.0,312.0 347.0,310.7" fill="none" stroke="#ffffff" stroke-width="2.2" stroke-linejoin="round" opacity="0.7"/>
<polyline points="409.3,344.7 396.3,334.5 378.7,319.6 368.0,306.0 358.6,295.6" fill="none" stroke="#ffffff" stroke-width="2.2" stroke-linejoin="round" opacity="0.7"/>
<polyline points="387.0,389.6 365.0,393.0 340.3,396.0 320.0,398.0 307.8,398.3" fill="none" stroke="#ffffff" stroke-width="2.2" stroke-linejoin="round" opacity="0.7"/>
<polyline points="344.9,362.6 342.0,380.0 340.3,396.0 330.0,408.6" fill="none" stroke="#ffffff" stroke-width="2.2" stroke-linejoin="round" opacity="0.7"/>
<polyline points="307.8,350.0 306.7,370.4 307.8,398.3" fill="none" stroke="#ffffff" stroke-width="2.2" stroke-linejoin="round" opacity="0.7"/>
<polyline points="306.7,370.4 321.5,373.1 344.9,362.6" fill="none" stroke="#ffffff" stroke-width="2.2" stroke-linejoin="round" opacity="0.7"/>
<polyline points="231.0,231.5 235.0,242.0 237.4,251.9 243.0,270.0 250.0,285.0 254.6,299.3 252.3,306.6" fill="none" stroke="#ffffff" stroke-width="2.2" stroke-linejoin="round" opacity="0.7"/>
<polyline points="246.6,166.9 247.7,201.0 245.4,212.6 251.0,235.4 253.4,254.0 255.0,270.0 258.0,285.0 256.0,297.0" fill="none" stroke="#ffffff" stroke-width="2.2" stroke-linejoin="round" opacity="0.7"/>
<polyline points="260.3,244.6 255.0,262.0 254.0,280.0 254.6,299.3" fill="none" stroke="#ffffff" stroke-width="2.2" stroke-linejoin="round" opacity="0.7"/>
<polyline points="231.0,231.5 240.0,226.0 245.4,212.6" fill="none" stroke="#ffffff" stroke-width="2.2" stroke-linejoin="round" opacity="0.7"/>
<polyline points="252.3,306.6 250.0,312.0 248.9,317.3 255.0,322.0 261.0,323.0" fill="none" stroke="#ffffff" stroke-width="2.2" stroke-linejoin="round" opacity="0.7"/>
<polyline points="422.6,399.4 428.0,412.0 430.6,423.4 440.0,422.0 455.0,418.0 468.3,407.4" fill="none" stroke="#ffffff" stroke-width="2.2" stroke-linejoin="round" opacity="0.7"/>
<polyline points="414.6,397.8 418.7,407.9" fill="none" stroke="#ffffff" stroke-width="2.2" stroke-linejoin="round" opacity="0.7"/>
<polyline points="426.0,352.3 441.3,340.4 464.4,342.0" fill="none" stroke="#ffffff" stroke-width="2.2" stroke-linejoin="round" opacity="0.7"/>
<polyline points="409.3,344.7 426.0,352.3" fill="none" stroke="#ffffff" stroke-width="2.2" stroke-linejoin="round" opacity="0.7"/>
<polyline points="464.4,342.0 466.0,364.0 482.0,375.0 482.7,398.3" fill="none" stroke="#ffffff" stroke-width="2.2" stroke-linejoin="round" opacity="0.7"/>
<polyline points="397.2,363.6 387.0,389.6" fill="none" stroke="#ffffff" stroke-width="2.2" stroke-linejoin="round" opacity="0.7"/>
<polyline points="359.3,373.6 380.0,368.0 397.2,363.6" fill="none" stroke="#ffffff" stroke-width="2.2" stroke-linejoin="round" opacity="0.7"/>
<polyline points="430.6,328.7 415.3,325.3" fill="none" stroke="#ffffff" stroke-width="2.2" stroke-linejoin="round" opacity="0.7"/>
<polyline points="430.6,328.7 441.3,340.4" fill="none" stroke="#ffffff" stroke-width="2.2" stroke-linejoin="round" opacity="0.7"/>
<polyline points="270.1,312.3 280.0,300.0 290.0,295.0 300.0,282.0" fill="none" stroke="#ffffff" stroke-width="2.2" stroke-linejoin="round" opacity="0.7"/>
<polyline points="297.3,391.0 300.0,380.0 306.7,370.4" fill="none" stroke="#ffffff" stroke-width="2.2" stroke-linejoin="round" opacity="0.7"/>
<polyline points="252.3,306.6 262.0,300.0 270.0,291.0" fill="none" stroke="#ffffff" stroke-width="2.2" stroke-linejoin="round" opacity="0.7"/>
<polyline points="254.6,299.3 266.0,296.0 280.0,300.0" fill="none" stroke="#ffffff" stroke-width="2.2" stroke-linejoin="round" opacity="0.7"/>
<polyline points="254.6,299.3 260.0,285.0 258.0,270.0 262.0,258.0" fill="none" stroke="#ffffff" stroke-width="2.2" stroke-linejoin="round" opacity="0.7"/>
<polyline points="243.0,270.0 252.0,275.0 262.0,272.0 270.0,280.0 270.0,291.0" fill="none" stroke="#ffffff" stroke-width="2.2" stroke-linejoin="round" opacity="0.7"/>
<polyline points="250.0,285.0 262.0,283.0 270.0,280.0" fill="none" stroke="#ffffff" stroke-width="2.2" stroke-linejoin="round" opacity="0.7"/>
<polyline points="262.0,258.0 275.0,262.0 285.0,270.0 285.0,287.0" fill="none" stroke="#ffffff" stroke-width="2.2" stroke-linejoin="round" opacity="0.7"/>
<polyline points="237.4,251.9 248.0,256.0 262.0,258.0" fill="none" stroke="#ffffff" stroke-width="2.2" stroke-linejoin="round" opacity="0.7"/>
<polyline points="262.0,300.0 264.0,312.0 270.1,312.3" fill="none" stroke="#ffffff" stroke-width="2.2" stroke-linejoin="round" opacity="0.7"/>
<polyline points="255.0,322.0 258.0,315.0 264.0,312.0" fill="none" stroke="#ffffff" stroke-width="2.2" stroke-linejoin="round" opacity="0.7"/>
<polyline points="229.0,262.0 235.0,272.0 240.0,280.0 246.0,284.0" fill="none" stroke="#ffffff" stroke-width="2.2" stroke-linejoin="round" opacity="0.7"/>
<polyline points="226.0,262.0 232.0,264.0 243.0,270.0" fill="none" stroke="#ffffff" stroke-width="2.2" stroke-linejoin="round" opacity="0.7"/>
<polyline points="229.0,262.0 228.0,280.0 231.0,296.0" fill="none" stroke="#ffffff" stroke-width="2.2" stroke-linejoin="round" opacity="0.7"/>
<polyline points="287.0,370.0 296.0,366.0 306.7,370.4" fill="none" stroke="#ffffff" stroke-width="2.2" stroke-linejoin="round" opacity="0.7"/>
<polyline points="290.0,382.0 300.0,386.0 307.8,398.3" fill="none" stroke="#ffffff" stroke-width="2.2" stroke-linejoin="round" opacity="0.7"/>
<polyline points="283.0,357.0 295.0,356.0 307.8,350.0" fill="none" stroke="#ffffff" stroke-width="2.2" stroke-linejoin="round" opacity="0.7"/>
<polyline points="292.0,372.0 294.0,384.0 297.3,391.0" fill="none" stroke="#ffffff" stroke-width="2.2" stroke-linejoin="round" opacity="0.7"/>
<polyline points="455.7,34.0 454.6,43.0 447.3,53.9 442.0,68.3 438.6,86.6 432.9,101.0 434.0,125.4 435.0,144.0 436.3,150.0 439.7,160.0" fill="none" stroke="#fad274" stroke-width="1.25" stroke-linejoin="round"/>
<polyline points="447.3,53.9 468.3,54.6 491.6,56.2 512.2,58.0 527.7,60.3 546.0,62.0 560.0,68.0 575.0,75.6 583.0,80.0 592.6,86.6" fill="none" stroke="#fad274" stroke-width="1.25" stroke-linejoin="round"/>
<polyline points="432.9,101.0 447.7,99.0 477.4,99.8 507.1,100.3 525.0,99.0 546.0,98.0" fill="none" stroke="#fad274" stroke-width="1.25" stroke-linejoin="round"/>
<polyline points="504.9,34.0 507.0,45.4 512.2,58.0 518.6,68.3 517.4,79.7 507.1,100.3 504.9,111.7 498.0,118.6 488.9,130.0 487.7,144.0 495.3,157.7" fill="none" stroke="#fad274" stroke-width="1.25" stroke-linejoin="round"/>
<polyline points="507.1,100.3 514.0,110.6 530.0,113.0 551.0,115.0" fill="none" stroke="#fad274" stroke-width="1.25" stroke-linejoin="round"/>
<polyline points="514.0,110.6 516.3,125.4 527.7,132.3 539.1,141.4" fill="none" stroke="#fad274" stroke-width="1.25" stroke-linejoin="round"/>
<polyline points="592.6,86.6 603.0,87.0 613.0,87.7 620.0,83.6" fill="none" stroke="#fad274" stroke-width="1.25" stroke-linejoin="round"/>
<polyline points="592.6,86.6 580.0,97.0 565.0,108.0 551.0,115.0 545.0,128.0 539.1,141.4" fill="none" stroke="#fad274" stroke-width="1.25" stroke-linejoin="round"/>
<polyline points="613.0,87.7 605.0,97.0 594.9,105.3 575.0,110.0 551.0,115.0" fill="none" stroke="#fad274" stroke-width="1.25" stroke-linejoin="round"/>
<polyline points="592.6,86.6 593.0,95.0 594.9,105.3 593.0,120.0 590.0,135.0 587.3,149.7 587.0,160.0 585.7,173.0 575.0,182.0 566.7,189.7" fill="none" stroke="#fad274" stroke-width="1.25" stroke-linejoin="round"/>
<polyline points="613.0,87.7 606.0,75.0 598.0,64.0 590.3,57.5 585.0,45.0 583.0,34.0" fill="none" stroke="#fad274" stroke-width="1.25" stroke-linejoin="round"/>
<polyline points="575.0,75.6 583.0,65.0 590.3,57.5" fill="none" stroke="#fad274" stroke-width="1.25" stroke-linejoin="round"/>
<polyline points="575.0,75.6 570.0,60.0 563.0,46.0 560.0,34.0" fill="none" stroke="#fad274" stroke-width="1.25" stroke-linejoin="round"/>
<polyline points="617.0,34.0 619.0,48.0 622.3,61.4 620.0,77.0 620.0,83.6 626.0,90.0 630.3,97.5 629.0,110.0 625.7,123.0 621.0,135.0 617.7,148.0 622.7,166.2 619.5,176.5 615.4,189.7 615.0,202.0 605.8,214.4 604.0,226.0 597.0,235.0 588.0,244.6 577.0,260.4 573.6,274.0" fill="none" stroke="#fad274" stroke-width="1.25" stroke-linejoin="round"/>
<polyline points="625.7,123.0 610.0,122.0 593.0,120.0" fill="none" stroke="#fad274" stroke-width="1.25" stroke-linejoin="round"/>
<polyline points="539.1,141.4 555.0,147.0 570.9,151.3 587.3,149.7 600.0,146.0 610.0,141.0 617.7,148.0" fill="none" stroke="#fad274" stroke-width="1.25" stroke-linejoin="round"/>
<polyline points="539.1,141.4 538.0,155.0 537.3,167.3 543.0,177.0 549.0,186.3 566.7,189.7" fill="none" stroke="#fad274" stroke-width="1.25" stroke-linejoin="round"/>
<polyline points="585.7,173.0 600.0,172.0 612.0,170.0 622.7,166.2" fill="none" stroke="#fad274" stroke-width="1.25" stroke-linejoin="round"/>
<polyline points="566.7,189.7 580.0,195.0 595.0,200.0 617.3,200.0" fill="none" stroke="#fad274" stroke-width="1.25" stroke-linejoin="round"/>
<polyline points="566.7,189.7 568.0,205.0 565.6,225.1 572.0,235.0 577.7,242.7 588.0,244.6" fill="none" stroke="#fad274" stroke-width="1.25" stroke-linejoin="round"/>
<polyline points="260.3,244.6 271.7,235.4 294.6,224.0 312.9,218.3 325.2,215.5 340.3,211.4 363.0,205.3 373.4,203.0 386.0,208.0 404.3,203.9 436.7,202.3 471.3,204.1" fill="none" stroke="#fad274" stroke-width="1.25" stroke-linejoin="round"/>
<polyline points="386.0,148.0 374.6,148.6 370.0,150.9 365.4,173.7 367.7,194.3 373.4,203.0 376.9,210.3 386.0,221.7 397.4,240.0 402.0,254.0 408.0,275.0 411.6,293.3" fill="none" stroke="#fad274" stroke-width="1.25" stroke-linejoin="round"/>
<polyline points="386.0,148.0 408.9,154.3 422.6,158.2 439.7,160.0" fill="none" stroke="#fad274" stroke-width="1.25" stroke-linejoin="round"/>
<polyline points="495.3,157.7 514.0,156.6 532.3,163.4 537.3,167.3" fill="none" stroke="#fad274" stroke-width="1.25" stroke-linejoin="round"/>
<polyline points="439.7,160.0 454.6,182.9 471.3,204.1 482.0,210.3 495.7,217.0 507.1,224.0" fill="none" stroke="#fad274" stroke-width="1.25" stroke-linejoin="round"/>
<polyline points="495.3,157.7 499.1,178.3 504.9,198.9 509.4,208.0 508.3,217.0 507.1,224.0" fill="none" stroke="#fad274" stroke-width="1.25" stroke-linejoin="round"/>
<polyline points="495.3,157.7 507.0,144.0 514.0,128.0 514.0,110.6" fill="none" stroke="#fad274" stroke-width="1.25" stroke-linejoin="round"/>
<polyline points="487.7,208.0 509.4,206.9 525.0,200.0 535.0,192.0 549.0,186.3" fill="none" stroke="#fad274" stroke-width="1.25" stroke-linejoin="round"/>
<polyline points="537.3,167.3 532.3,178.3 525.4,194.3 514.0,205.7" fill="none" stroke="#fad274" stroke-width="1.25" stroke-linejoin="round"/>
<polyline points="507.1,224.0 517.0,219.0 527.7,217.6 545.0,221.0 565.6,225.1" fill="none" stroke="#fad274" stroke-width="1.25" stroke-linejoin="round"/>
<polyline points="527.7,217.6 533.0,234.7 540.0,248.0 548.0,258.5" fill="none" stroke="#fad274" stroke-width="1.25" stroke-linejoin="round"/>
<polyline points="507.1,224.0 512.0,238.0 522.0,255.0 535.0,258.0 548.0,258.5 562.2,265.4 573.6,274.0" fill="none" stroke="#fad274" stroke-width="1.25" stroke-linejoin="round"/>
<polyline points="325.2,215.5 325.4,224.0 328.9,235.4 330.7,254.0 334.0,268.0 342.1,283.7" fill="none" stroke="#fad274" stroke-width="1.25" stroke-linejoin="round"/>
<polyline points="342.1,283.7 320.0,284.0 313.0,283.0 300.0,282.0 285.0,287.0 270.0,291.0 258.0,298.0 252.3,306.6" fill="none" stroke="#fad274" stroke-width="1.25" stroke-linejoin="round"/>
<polyline points="342.1,283.7 345.0,297.0 347.0,310.7 352.0,325.0 349.4,348.2 344.9,362.6" fill="none" stroke="#fad274" stroke-width="1.25" stroke-linejoin="round"/>
<polyline points="342.1,283.7 352.0,290.0 358.6,295.6 378.7,297.4 395.0,295.0 411.6,293.3 430.0,290.0 442.0,287.1 455.0,282.0 472.2,275.7 485.0,268.0 491.8,258.6 496.9,251.0 502.0,238.0 507.1,224.0" fill="none" stroke="#fad274" stroke-width="1.25" stroke-linejoin="round"/>
<polyline points="411.6,293.3 413.0,310.0 415.3,325.3 412.0,336.0 409.3,344.7 406.0,354.0 397.2,363.6 405.0,375.0 405.0,386.9 414.6,397.8" fill="none" stroke="#fad274" stroke-width="1.25" stroke-linejoin="round"/>
<polyline points="414.6,397.8 417.0,385.0 419.1,372.7 430.6,364.0 445.0,352.0 464.4,342.0 470.0,330.0 480.0,318.0 495.3,310.5 510.0,304.0 522.0,301.0 535.7,301.5 548.0,292.0 563.5,280.3 573.6,274.0" fill="none" stroke="#fad274" stroke-width="1.25" stroke-linejoin="round"/>
<polyline points="419.1,372.7 426.0,352.3 430.6,328.7 440.0,310.0 451.6,295.6 460.0,285.0 472.2,275.7" fill="none" stroke="#fad274" stroke-width="1.25" stroke-linejoin="round"/>
<polyline points="522.0,255.0 508.0,250.0 496.9,251.0 484.0,250.0 470.6,249.6" fill="none" stroke="#fad274" stroke-width="1.25" stroke-linejoin="round"/>
<polyline points="499.6,287.8 509.4,272.7 522.0,255.0" fill="none" stroke="#fad274" stroke-width="1.25" stroke-linejoin="round"/>
<polyline points="476.3,311.6 455.0,300.0 440.0,294.0 425.0,293.0 411.6,293.3" fill="none" stroke="#fad274" stroke-width="1.25" stroke-linejoin="round"/>
<polyline points="464.4,342.0 467.0,324.9 476.3,311.6 482.0,304.3 488.0,296.0 499.6,287.8" fill="none" stroke="#fad274" stroke-width="1.25" stroke-linejoin="round"/>
<polyline points="482.0,304.3 480.4,291.7 472.2,275.7" fill="none" stroke="#fad274" stroke-width="1.25" stroke-linejoin="round"/>
<polyline points="522.0,316.9 528.0,308.0 535.7,301.5" fill="none" stroke="#fad274" stroke-width="1.25" stroke-linejoin="round"/>
<polyline points="522.0,316.9 521.0,332.0 520.9,347.7 530.0,356.0 544.0,361.0" fill="none" stroke="#fad274" stroke-width="1.25" stroke-linejoin="round"/>
<polyline points="520.9,347.7 507.8,353.4" fill="none" stroke="#fad274" stroke-width="1.25" stroke-linejoin="round"/>
<polyline points="573.6,274.0 565.6,290.6 558.7,304.7 554.9,319.8 548.5,331.7 546.4,347.3 544.0,361.0 540.3,374.3 532.0,388.0 520.0,393.0 505.0,394.0 492.0,397.0 482.7,398.3 468.3,407.4 451.6,411.5 436.0,406.0 422.6,399.4 414.6,397.8" fill="none" stroke="#fad274" stroke-width="1.25" stroke-linejoin="round"/>
<polyline points="414.6,397.8 407.0,403.0 399.3,407.9 385.0,411.0 370.0,414.0 351.0,416.6 340.0,411.0 330.0,408.6 318.0,402.0 307.8,398.3 297.3,391.0 290.0,382.0 287.0,370.0 283.0,357.0 277.0,345.0 272.0,333.0 270.1,312.3 260.0,309.0 252.3,306.6" fill="none" stroke="#fad274" stroke-width="1.25" stroke-linejoin="round"/>
<polyline points="414.6,397.8 400.0,392.0 387.0,389.6 375.0,385.0 363.1,381.1 359.3,373.6 344.9,362.6 339.8,354.6 330.0,350.5 307.8,350.0 295.0,340.0 283.0,325.0 270.1,312.3" fill="none" stroke="#fad274" stroke-width="1.25" stroke-linejoin="round"/>
<polyline points="405.0,386.9 397.2,363.6 395.0,345.0 385.0,330.0 378.7,319.6 365.0,312.0 347.0,310.7" fill="none" stroke="#fad274" stroke-width="1.25" stroke-linejoin="round"/>
<polyline points="409.3,344.7 396.3,334.5 378.7,319.6 368.0,306.0 358.6,295.6" fill="none" stroke="#fad274" stroke-width="1.25" stroke-linejoin="round"/>
<polyline points="387.0,389.6 365.0,393.0 340.3,396.0 320.0,398.0 307.8,398.3" fill="none" stroke="#fad274" stroke-width="1.25" stroke-linejoin="round"/>
<polyline points="344.9,362.6 342.0,380.0 340.3,396.0 330.0,408.6" fill="none" stroke="#fad274" stroke-width="1.25" stroke-linejoin="round"/>
<polyline points="307.8,350.0 306.7,370.4 307.8,398.3" fill="none" stroke="#fad274" stroke-width="1.25" stroke-linejoin="round"/>
<polyline points="306.7,370.4 321.5,373.1 344.9,362.6" fill="none" stroke="#fad274" stroke-width="1.25" stroke-linejoin="round"/>
<polyline points="231.0,231.5 235.0,242.0 237.4,251.9 243.0,270.0 250.0,285.0 254.6,299.3 252.3,306.6" fill="none" stroke="#fad274" stroke-width="1.25" stroke-linejoin="round"/>
<polyline points="246.6,166.9 247.7,201.0 245.4,212.6 251.0,235.4 253.4,254.0 255.0,270.0 258.0,285.0 256.0,297.0" fill="none" stroke="#fad274" stroke-width="1.25" stroke-linejoin="round"/>
<polyline points="260.3,244.6 255.0,262.0 254.0,280.0 254.6,299.3" fill="none" stroke="#fad274" stroke-width="1.25" stroke-linejoin="round"/>
<polyline points="231.0,231.5 240.0,226.0 245.4,212.6" fill="none" stroke="#fad274" stroke-width="1.25" stroke-linejoin="round"/>
<polyline points="252.3,306.6 250.0,312.0 248.9,317.3 255.0,322.0 261.0,323.0" fill="none" stroke="#fad274" stroke-width="1.25" stroke-linejoin="round"/>
<polyline points="422.6,399.4 428.0,412.0 430.6,423.4 440.0,422.0 455.0,418.0 468.3,407.4" fill="none" stroke="#fad274" stroke-width="1.25" stroke-linejoin="round"/>
<polyline points="414.6,397.8 418.7,407.9" fill="none" stroke="#fad274" stroke-width="1.25" stroke-linejoin="round"/>
<polyline points="426.0,352.3 441.3,340.4 464.4,342.0" fill="none" stroke="#fad274" stroke-width="1.25" stroke-linejoin="round"/>
<polyline points="409.3,344.7 426.0,352.3" fill="none" stroke="#fad274" stroke-width="1.25" stroke-linejoin="round"/>
<polyline points="464.4,342.0 466.0,364.0 482.0,375.0 482.7,398.3" fill="none" stroke="#fad274" stroke-width="1.25" stroke-linejoin="round"/>
<polyline points="397.2,363.6 387.0,389.6" fill="none" stroke="#fad274" stroke-width="1.25" stroke-linejoin="round"/>
<polyline points="359.3,373.6 380.0,368.0 397.2,363.6" fill="none" stroke="#fad274" stroke-width="1.25" stroke-linejoin="round"/>
<polyline points="430.6,328.7 415.3,325.3" fill="none" stroke="#fad274" stroke-width="1.25" stroke-linejoin="round"/>
<polyline points="430.6,328.7 441.3,340.4" fill="none" stroke="#fad274" stroke-width="1.25" stroke-linejoin="round"/>
<polyline points="270.1,312.3 280.0,300.0 290.0,295.0 300.0,282.0" fill="none" stroke="#fad274" stroke-width="1.25" stroke-linejoin="round"/>
<polyline points="297.3,391.0 300.0,380.0 306.7,370.4" fill="none" stroke="#fad274" stroke-width="1.25" stroke-linejoin="round"/>
<polyline points="252.3,306.6 262.0,300.0 270.0,291.0" fill="none" stroke="#fad274" stroke-width="1.25" stroke-linejoin="round"/>
<polyline points="254.6,299.3 266.0,296.0 280.0,300.0" fill="none" stroke="#fad274" stroke-width="1.25" stroke-linejoin="round"/>
<polyline points="254.6,299.3 260.0,285.0 258.0,270.0 262.0,258.0" fill="none" stroke="#fad274" stroke-width="1.25" stroke-linejoin="round"/>
<polyline points="243.0,270.0 252.0,275.0 262.0,272.0 270.0,280.0 270.0,291.0" fill="none" stroke="#fad274" stroke-width="1.25" stroke-linejoin="round"/>
<polyline points="250.0,285.0 262.0,283.0 270.0,280.0" fill="none" stroke="#fad274" stroke-width="1.25" stroke-linejoin="round"/>
<polyline points="262.0,258.0 275.0,262.0 285.0,270.0 285.0,287.0" fill="none" stroke="#fad274" stroke-width="1.25" stroke-linejoin="round"/>
<polyline points="237.4,251.9 248.0,256.0 262.0,258.0" fill="none" stroke="#fad274" stroke-width="1.25" stroke-linejoin="round"/>
<polyline points="262.0,300.0 264.0,312.0 270.1,312.3" fill="none" stroke="#fad274" stroke-width="1.25" stroke-linejoin="round"/>
<polyline points="255.0,322.0 258.0,315.0 264.0,312.0" fill="none" stroke="#fad274" stroke-width="1.25" stroke-linejoin="round"/>
<polyline points="229.0,262.0 235.0,272.0 240.0,280.0 246.0,284.0" fill="none" stroke="#fad274" stroke-width="1.25" stroke-linejoin="round"/>
<polyline points="226.0,262.0 232.0,264.0 243.0,270.0" fill="none" stroke="#fad274" stroke-width="1.25" stroke-linejoin="round"/>
<polyline points="229.0,262.0 228.0,280.0 231.0,296.0" fill="none" stroke="#fad274" stroke-width="1.25" stroke-linejoin="round"/>
<polyline points="287.0,370.0 296.0,366.0 306.7,370.4" fill="none" stroke="#fad274" stroke-width="1.25" stroke-linejoin="round"/>
<polyline points="290.0,382.0 300.0,386.0 307.8,398.3" fill="none" stroke="#fad274" stroke-width="1.25" stroke-linejoin="round"/>
<polyline points="283.0,357.0 295.0,356.0 307.8,350.0" fill="none" stroke="#fad274" stroke-width="1.25" stroke-linejoin="round"/>
<polyline points="292.0,372.0 294.0,384.0 297.3,391.0" fill="none" stroke="#fad274" stroke-width="1.25" stroke-linejoin="round"/>
<polyline points="414.5,397.6 405.0,387.2" fill="none" stroke="#f6a93b" stroke-width="1.5" stroke-linejoin="round" stroke-linecap="round" opacity="0.9"/>
<polyline points="414.5,397.6 404.0,394.0 396.0,393.0" fill="none" stroke="#f6a93b" stroke-width="1.5" stroke-linejoin="round" stroke-linecap="round" opacity="0.9"/>
<polyline points="414.5,397.6 407.0,403.0 399.1,407.9" fill="none" stroke="#f6a93b" stroke-width="1.5" stroke-linejoin="round" stroke-linecap="round" opacity="0.9"/>
<polyline points="414.5,397.6 414.5,388.0 415.5,381.0" fill="none" stroke="#f6a93b" stroke-width="1.5" stroke-linejoin="round" stroke-linecap="round" opacity="0.9"/>
<polyline points="414.5,397.6 421.0,390.0 426.0,385.0" fill="none" stroke="#f6a93b" stroke-width="1.5" stroke-linejoin="round" stroke-linecap="round" opacity="0.9"/>
<polyline points="414.5,397.6 422.7,399.6 431.0,402.0 437.0,406.0" fill="none" stroke="#f6a93b" stroke-width="1.5" stroke-linejoin="round" stroke-linecap="round" opacity="0.9"/>
<polyline points="414.5,397.6 417.0,403.0 418.3,407.9 422.0,413.0" fill="none" stroke="#f6a93b" stroke-width="1.5" stroke-linejoin="round" stroke-linecap="round" opacity="0.9"/>
<polyline points="418.0,401.0 424.0,406.0 430.0,412.0" fill="none" stroke="#f6a93b" stroke-width="1.5" stroke-linejoin="round" stroke-linecap="round" opacity="0.9"/>
<polyline points="573.6,274.0 577.0,260.4" fill="none" stroke="#f6a93b" stroke-width="1.5" stroke-linejoin="round" stroke-linecap="round" opacity="0.9"/>
<polyline points="573.6,274.0 567.0,268.0 562.2,265.4 555.0,262.0" fill="none" stroke="#f6a93b" stroke-width="1.5" stroke-linejoin="round" stroke-linecap="round" opacity="0.9"/>
<polyline points="573.6,274.0 568.0,276.0 563.5,280.3" fill="none" stroke="#f6a93b" stroke-width="1.5" stroke-linejoin="round" stroke-linecap="round" opacity="0.9"/>
<polyline points="573.6,274.0 570.0,282.0 565.6,290.6" fill="none" stroke="#f6a93b" stroke-width="1.5" stroke-linejoin="round" stroke-linecap="round" opacity="0.9"/>
<polyline points="573.6,274.0 566.0,272.0 560.0,271.0" fill="none" stroke="#f6a93b" stroke-width="1.5" stroke-linejoin="round" stroke-linecap="round" opacity="0.9"/>
<polyline points="570.0,266.0 575.0,268.0 577.0,272.0" fill="none" stroke="#f6a93b" stroke-width="1.5" stroke-linejoin="round" stroke-linecap="round" opacity="0.9"/>
<polyline points="563.5,280.3 560.0,286.0 556.0,290.0" fill="none" stroke="#f6a93b" stroke-width="1.5" stroke-linejoin="round" stroke-linecap="round" opacity="0.9"/>
<polyline points="620.0,83.6 620.0,77.0 621.0,70.0" fill="none" stroke="#f6a93b" stroke-width="1.5" stroke-linejoin="round" stroke-linecap="round" opacity="0.9"/>
<polyline points="620.0,83.6 613.0,87.7 606.0,88.0" fill="none" stroke="#f6a93b" stroke-width="1.5" stroke-linejoin="round" stroke-linecap="round" opacity="0.9"/>
<polyline points="620.0,83.6 625.0,90.0 630.3,97.5 630.0,104.0" fill="none" stroke="#f6a93b" stroke-width="1.5" stroke-linejoin="round" stroke-linecap="round" opacity="0.9"/>
<polyline points="620.0,83.6 616.0,80.0 612.0,76.0" fill="none" stroke="#f6a93b" stroke-width="1.5" stroke-linejoin="round" stroke-linecap="round" opacity="0.9"/>
<polyline points="620.0,83.6 624.0,86.0 626.0,92.0" fill="none" stroke="#f6a93b" stroke-width="1.5" stroke-linejoin="round" stroke-linecap="round" opacity="0.9"/>
<polyline points="252.3,306.6 254.6,299.3 255.0,293.0" fill="none" stroke="#f6a93b" stroke-width="1.5" stroke-linejoin="round" stroke-linecap="round" opacity="0.9"/>
<polyline points="252.3,306.6 250.0,312.0 248.9,317.3" fill="none" stroke="#f6a93b" stroke-width="1.5" stroke-linejoin="round" stroke-linecap="round" opacity="0.9"/>
<polyline points="252.3,306.6 258.0,308.0 263.0,310.0" fill="none" stroke="#f6a93b" stroke-width="1.5" stroke-linejoin="round" stroke-linecap="round" opacity="0.9"/>
<polyline points="588.0,244.6 584.0,250.0 580.0,255.0" fill="none" stroke="#f6a93b" stroke-width="1.5" stroke-linejoin="round" stroke-linecap="round" opacity="0.9"/>
<polyline points="522.0,316.9 526.0,311.0 529.0,307.0" fill="none" stroke="#f6a93b" stroke-width="1.5" stroke-linejoin="round" stroke-linecap="round" opacity="0.9"/>
<circle cx="620" cy="84" r="3.5" fill="#f7b04a" opacity="0.35"/>
<circle cx="573" cy="273" r="4" fill="#f7b04a" opacity="0.35"/>
<circle cx="416" cy="399" r="4" fill="#f7b04a" opacity="0.35"/>
<circle cx="252.5" cy="306" r="3" fill="#f7b04a" opacity="0.35"/>
<path d="M517 330L540 339.7L562.9 347.3" fill="none" stroke="#888" stroke-width="0.8"/>
<g fill="#c48a35" fill-opacity="0.85">
<circle cx="442.0" cy="50.0" r="1.8"/>
<circle cx="443.1" cy="53.4" r="1.8"/>
<circle cx="445.0" cy="49.0" r="1.8"/>
<circle cx="469.4" cy="43.6" r="1.8"/>
<circle cx="467.8" cy="50.5" r="1.8"/>
<circle cx="470.6" cy="49.0" r="1.8"/>
<circle cx="475.6" cy="49.5" r="1.8"/>
<circle cx="506.0" cy="37.4" r="1.8"/>
<circle cx="427.1" cy="84.3" r="1.8"/>
<circle cx="427.1" cy="87.0" r="1.8"/>
<circle cx="476.3" cy="81.5" r="1.8"/>
<circle cx="502.6" cy="81.5" r="1.8"/>
<circle cx="482.0" cy="89.5" r="1.8"/>
<circle cx="484.7" cy="91.0" r="1.8"/>
<circle cx="426.5" cy="104.4" r="1.8"/>
<circle cx="469.4" cy="130.5" r="1.8"/>
<circle cx="543.7" cy="51.0" r="1.8"/>
<circle cx="493.4" cy="50.5" r="1.8"/>
<circle cx="544.0" cy="46.0" r="1.8"/>
<circle cx="237.9" cy="158.2" r="1.8"/>
<circle cx="250.0" cy="166.9" r="1.8"/>
<circle cx="267.1" cy="160.0" r="1.8"/>
<circle cx="267.8" cy="163.0" r="1.8"/>
<circle cx="323.6" cy="188.6" r="1.8"/>
<circle cx="316.3" cy="201.6" r="1.8"/>
<circle cx="323.8" cy="199.3" r="1.8"/>
<circle cx="340.3" cy="192.5" r="1.8"/>
<circle cx="343.3" cy="191.3" r="1.8"/>
<circle cx="324.3" cy="224.0" r="1.8"/>
<circle cx="322.5" cy="231.5" r="1.8"/>
<circle cx="323.1" cy="253.3" r="1.8"/>
<circle cx="246.6" cy="195.4" r="1.8"/>
<circle cx="426.7" cy="166.4" r="1.8"/>
<circle cx="445.9" cy="166.9" r="1.8"/>
<circle cx="448.9" cy="171.4" r="1.8"/>
<circle cx="399.7" cy="197.7" r="1.8"/>
<circle cx="427.1" cy="196.6" r="1.8"/>
<circle cx="423.7" cy="226.3" r="1.8"/>
<circle cx="502.3" cy="168.5" r="1.8"/>
<circle cx="514.6" cy="167.4" r="1.8"/>
<circle cx="520.0" cy="169.1" r="1.8"/>
<circle cx="523.6" cy="166.8" r="1.8"/>
<circle cx="523.6" cy="158.6" r="1.8"/>
<circle cx="511.9" cy="176.4" r="1.8"/>
<circle cx="532.6" cy="164.0" r="1.8"/>
<circle cx="519.3" cy="185.0" r="1.8"/>
<circle cx="520.9" cy="190.9" r="1.8"/>
<circle cx="524.3" cy="194.7" r="1.8"/>
<circle cx="503.7" cy="198.9" r="1.8"/>
<circle cx="504.9" cy="204.6" r="1.8"/>
<circle cx="544.4" cy="195.4" r="1.8"/>
<circle cx="543.7" cy="200.0" r="1.8"/>
<circle cx="445.4" cy="160.0" r="1.8"/>
<circle cx="294.6" cy="256.3" r="1.8"/>
<circle cx="298.7" cy="255.4" r="1.8"/>
<circle cx="295.0" cy="262.0" r="1.8"/>
<circle cx="295.7" cy="264.3" r="1.8"/>
<circle cx="349.4" cy="258.6" r="1.8"/>
<circle cx="367.0" cy="260.4" r="1.8"/>
<circle cx="269.4" cy="281.4" r="1.8"/>
<circle cx="269.4" cy="283.7" r="1.8"/>
<circle cx="296.4" cy="278.0" r="1.8"/>
<circle cx="298.7" cy="278.0" r="1.8"/>
<circle cx="304.9" cy="280.3" r="1.8"/>
<circle cx="296.9" cy="284.9" r="1.8"/>
<circle cx="322.0" cy="282.6" r="1.8"/>
<circle cx="366.0" cy="287.8" r="1.8"/>
<circle cx="277.4" cy="298.6" r="1.8"/>
<circle cx="346.5" cy="297.0" r="1.8"/>
<circle cx="367.0" cy="299.7" r="1.8"/>
<circle cx="339.8" cy="313.0" r="1.8"/>
<circle cx="294.6" cy="324.9" r="1.8"/>
<circle cx="275.8" cy="326.7" r="1.8"/>
<circle cx="319.3" cy="323.0" r="1.8"/>
<circle cx="324.3" cy="322.6" r="1.8"/>
<circle cx="325.9" cy="325.3" r="1.8"/>
<circle cx="293.4" cy="341.3" r="1.8"/>
<circle cx="332.3" cy="338.1" r="1.8"/>
<circle cx="338.0" cy="336.7" r="1.8"/>
<circle cx="325.0" cy="347.3" r="1.8"/>
<circle cx="322.0" cy="348.9" r="1.8"/>
<circle cx="335.7" cy="359.8" r="1.8"/>
<circle cx="401.5" cy="288.7" r="1.8"/>
<circle cx="400.2" cy="311.6" r="1.8"/>
<circle cx="420.7" cy="315.3" r="1.8"/>
<circle cx="445.0" cy="316.2" r="1.8"/>
<circle cx="420.3" cy="345.4" r="1.8"/>
<circle cx="452.3" cy="346.6" r="1.8"/>
<circle cx="472.9" cy="356.9" r="1.8"/>
<circle cx="479.7" cy="345.0" r="1.8"/>
<circle cx="445.4" cy="387.3" r="1.8"/>
<circle cx="443.0" cy="381.8" r="1.8"/>
<circle cx="431.7" cy="386.9" r="1.8"/>
<circle cx="474.5" cy="393.3" r="1.8"/>
<circle cx="495.3" cy="386.2" r="1.8"/>
<circle cx="504.9" cy="383.0" r="1.8"/>
<circle cx="499.8" cy="392.0" r="1.8"/>
<circle cx="528.9" cy="394.4" r="1.8"/>
<circle cx="533.4" cy="367.4" r="1.8"/>
<circle cx="472.9" cy="366.7" r="1.8"/>
<circle cx="468.3" cy="398.3" r="1.8"/>
<circle cx="439.0" cy="412.5" r="1.8"/>
<circle cx="438.6" cy="408.6" r="1.8"/>
<circle cx="420.3" cy="420.0" r="1.8"/>
<circle cx="450.0" cy="433.7" r="1.8"/>
<circle cx="493.4" cy="471.0" r="1.8"/>
<circle cx="346.0" cy="373.6" r="1.8"/>
<circle cx="346.5" cy="376.6" r="1.8"/>
<circle cx="344.9" cy="380.5" r="1.8"/>
<circle cx="283.6" cy="371.5" r="1.8"/>
<circle cx="304.9" cy="394.9" r="1.8"/>
<circle cx="318.1" cy="400.6" r="1.8"/>
<circle cx="324.7" cy="412.0" r="1.8"/>
<circle cx="256.0" cy="304.0" r="1.8"/>
<circle cx="258.0" cy="308.0" r="1.8"/>
<circle cx="252.0" cy="312.0" r="1.8"/>
<circle cx="249.0" cy="317.5" r="1.8"/>
<circle cx="251.0" cy="319.0" r="1.8"/>
<circle cx="254.0" cy="309.0" r="1.8"/>
<circle cx="505.0" cy="275.0" r="1.8"/>
<circle cx="500.0" cy="268.0" r="1.8"/>
<circle cx="515.0" cy="270.0" r="1.8"/>
<circle cx="497.0" cy="262.0" r="1.8"/>
<circle cx="512.0" cy="262.0" r="1.8"/>
<circle cx="520.0" cy="248.0" r="1.8"/>
<circle cx="547.0" cy="150.0" r="1.8"/>
<circle cx="556.0" cy="158.0" r="1.8"/>
<circle cx="562.0" cy="175.0" r="1.8"/>
<circle cx="553.0" cy="195.0" r="1.8"/>
<circle cx="548.0" cy="199.0" r="1.8"/>
<circle cx="571.0" cy="206.0" r="1.8"/>
<circle cx="575.0" cy="214.0" r="1.8"/>
<circle cx="583.0" cy="210.0" r="1.8"/>
<circle cx="590.0" cy="205.0" r="1.8"/>
<circle cx="621.6" cy="40.5" r="1.8"/>
<circle cx="608.6" cy="45.6" r="1.8"/>
<circle cx="603.5" cy="48.0" r="1.8"/>
<circle cx="606.4" cy="52.8" r="1.8"/>
<circle cx="610.4" cy="54.3" r="1.8"/>
<circle cx="620.0" cy="49.2" r="1.8"/>
<circle cx="577.4" cy="53.6" r="1.8"/>
<circle cx="576.7" cy="56.5" r="1.8"/>
<circle cx="583.2" cy="56.0" r="1.8"/>
<circle cx="594.5" cy="52.8" r="1.8"/>
<circle cx="594.5" cy="58.6" r="1.8"/>
<circle cx="588.3" cy="62.3" r="1.8"/>
<circle cx="583.2" cy="66.2" r="1.8"/>
<circle cx="611.4" cy="65.2" r="1.8"/>
<circle cx="615.8" cy="61.5" r="1.8"/>
<circle cx="570.0" cy="76.0" r="1.8"/>
<circle cx="581.0" cy="75.3" r="1.8"/>
<circle cx="583.2" cy="79.7" r="1.8"/>
<circle cx="593.6" cy="73.4" r="1.8"/>
<circle cx="595.5" cy="75.3" r="1.8"/>
<circle cx="596.5" cy="76.8" r="1.8"/>
<circle cx="594.0" cy="79.2" r="1.8"/>
<circle cx="597.7" cy="79.7" r="1.8"/>
<circle cx="605.0" cy="75.7" r="1.8"/>
<circle cx="607.1" cy="77.2" r="1.8"/>
<circle cx="606.4" cy="81.1" r="1.8"/>
<circle cx="612.2" cy="79.0" r="1.8"/>
<circle cx="614.3" cy="80.4" r="1.8"/>
<circle cx="618.0" cy="73.9" r="1.8"/>
<circle cx="621.6" cy="80.4" r="1.8"/>
<circle cx="629.6" cy="74.6" r="1.8"/>
<circle cx="630.6" cy="81.8" r="1.8"/>
<circle cx="575.2" cy="94.9" r="1.8"/>
<circle cx="571.3" cy="101.4" r="1.8"/>
<circle cx="592.6" cy="100.0" r="1.8"/>
<circle cx="595.5" cy="100.7" r="1.8"/>
<circle cx="603.5" cy="100.7" r="1.8"/>
<circle cx="622.3" cy="95.6" r="1.8"/>
<circle cx="623.8" cy="97.8" r="1.8"/>
<circle cx="622.3" cy="102.0" r="1.8"/>
<circle cx="624.5" cy="101.4" r="1.8"/>
<circle cx="618.0" cy="84.7" r="1.8"/>
<circle cx="619.4" cy="88.3" r="1.8"/>
<circle cx="621.6" cy="90.5" r="1.8"/>
<circle cx="616.0" cy="86.0" r="1.8"/>
<circle cx="622.5" cy="86.5" r="1.8"/>
<circle cx="624.0" cy="92.0" r="1.8"/>
<circle cx="570.4" cy="107.3" r="1.8"/>
<circle cx="582.9" cy="104.9" r="1.8"/>
<circle cx="582.5" cy="110.2" r="1.8"/>
<circle cx="587.5" cy="109.5" r="1.8"/>
<circle cx="599.1" cy="105.1" r="1.8"/>
<circle cx="601.3" cy="108.8" r="1.8"/>
<circle cx="603.5" cy="107.3" r="1.8"/>
<circle cx="605.7" cy="112.4" r="1.8"/>
<circle cx="608.6" cy="112.4" r="1.8"/>
<circle cx="604.9" cy="110.2" r="1.8"/>
<circle cx="593.3" cy="110.2" r="1.8"/>
<circle cx="612.5" cy="118.2" r="1.8"/>
<circle cx="595.5" cy="118.9" r="1.8"/>
<circle cx="591.2" cy="123.3" r="1.8"/>
<circle cx="597.7" cy="124.7" r="1.8"/>
<circle cx="583.2" cy="125.4" r="1.8"/>
<circle cx="581.7" cy="129.8" r="1.8"/>
<circle cx="593.6" cy="129.5" r="1.8"/>
<circle cx="598.4" cy="136.3" r="1.8"/>
<circle cx="608.6" cy="139.9" r="1.8"/>
<circle cx="626.0" cy="139.9" r="1.8"/>
<circle cx="574.8" cy="150.8" r="1.8"/>
<circle cx="587.2" cy="149.8" r="1.8"/>
<circle cx="585.8" cy="163.1" r="1.8"/>
<circle cx="620.1" cy="161.7" r="1.8"/>
<circle cx="634.9" cy="117.9" r="1.8"/>
<circle cx="624.5" cy="129.8" r="1.8"/>
<circle cx="623.0" cy="103.0" r="1.8"/>
<circle cx="625.0" cy="105.0" r="1.8"/>
<circle cx="626.5" cy="107.0" r="1.8"/>
<circle cx="624.0" cy="108.5" r="1.8"/>
<circle cx="626.0" cy="110.0" r="1.8"/>
<circle cx="627.5" cy="112.0" r="1.8"/>
<circle cx="625.0" cy="113.0" r="1.8"/>
<circle cx="627.0" cy="115.0" r="1.8"/>
<circle cx="626.0" cy="117.5" r="1.8"/>
<circle cx="628.0" cy="104.0" r="1.8"/>
<circle cx="623.5" cy="111.0" r="1.8"/>
<circle cx="628.5" cy="109.0" r="1.8"/>
<circle cx="401.0" cy="393.0" r="1.8"/>
<circle cx="411.0" cy="393.0" r="1.8"/>
<circle cx="420.0" cy="394.0" r="1.8"/>
<circle cx="425.0" cy="396.0" r="1.8"/>
<circle cx="427.6" cy="402.0" r="1.8"/>
<circle cx="434.3" cy="403.8" r="1.8"/>
<circle cx="439.5" cy="409.0" r="1.8"/>
<circle cx="439.0" cy="413.0" r="1.8"/>
<circle cx="419.8" cy="420.3" r="1.8"/>
<circle cx="450.3" cy="404.3" r="1.8"/>
<circle cx="432.2" cy="385.2" r="1.8"/>
<circle cx="443.6" cy="382.6" r="1.8"/>
<circle cx="445.7" cy="387.2" r="1.8"/>
<circle cx="431.2" cy="388.3" r="1.8"/>
<circle cx="396.5" cy="400.7" r="1.8"/>
<circle cx="425.0" cy="399.6" r="1.8"/>
<circle cx="416.0" cy="395.5" r="1.8"/>
<circle cx="418.5" cy="397.0" r="1.8"/>
<circle cx="421.0" cy="403.0" r="1.8"/>
<circle cx="586.2" cy="160.7" r="1.8"/>
<circle cx="586.0" cy="165.0" r="1.8"/>
<circle cx="581.4" cy="176.3" r="1.8"/>
<circle cx="578.3" cy="179.4" r="1.8"/>
<circle cx="573.0" cy="183.5" r="1.8"/>
<circle cx="571.0" cy="188.0" r="1.8"/>
<circle cx="598.0" cy="165.9" r="1.8"/>
<circle cx="600.0" cy="169.0" r="1.8"/>
<circle cx="605.2" cy="174.2" r="1.8"/>
<circle cx="610.4" cy="175.6" r="1.8"/>
<circle cx="612.5" cy="177.3" r="1.8"/>
<circle cx="614.6" cy="180.4" r="1.8"/>
<circle cx="617.7" cy="178.3" r="1.8"/>
<circle cx="620.8" cy="160.7" r="1.8"/>
<circle cx="626.0" cy="141.0" r="1.8"/>
<circle cx="619.7" cy="188.0" r="1.8"/>
<circle cx="594.9" cy="196.0" r="1.8"/>
<circle cx="592.8" cy="200.1" r="1.8"/>
<circle cx="575.2" cy="202.2" r="1.8"/>
<circle cx="573.1" cy="204.2" r="1.8"/>
<circle cx="604.2" cy="197.0" r="1.8"/>
<circle cx="601.1" cy="207.4" r="1.8"/>
<circle cx="595.9" cy="208.4" r="1.8"/>
<circle cx="588.7" cy="212.5" r="1.8"/>
<circle cx="583.5" cy="213.6" r="1.8"/>
<circle cx="580.4" cy="215.0" r="1.8"/>
<circle cx="603.2" cy="211.5" r="1.8"/>
<circle cx="598.0" cy="222.9" r="1.8"/>
<circle cx="597.0" cy="225.0" r="1.8"/>
<circle cx="581.4" cy="225.4" r="1.8"/>
<circle cx="576.2" cy="221.9" r="1.8"/>
<circle cx="606.3" cy="228.0" r="1.8"/>
<circle cx="603.2" cy="230.2" r="1.8"/>
<circle cx="571.0" cy="230.0" r="1.8"/>
<circle cx="570.0" cy="248.1" r="1.8"/>
<circle cx="570.2" cy="243.1" r="1.8"/>
<circle cx="564.6" cy="243.7" r="1.8"/>
<circle cx="580.9" cy="247.5" r="1.8"/>
<circle cx="580.3" cy="246.5" r="1.8"/>
<circle cx="575.2" cy="246.1" r="1.8"/>
<circle cx="558.7" cy="250.1" r="1.8"/>
<circle cx="576.1" cy="248.0" r="1.8"/>
<circle cx="558.5" cy="234.5" r="1.8"/>
<circle cx="564.9" cy="242.2" r="1.8"/>
<circle cx="574.4" cy="244.7" r="1.8"/>
<circle cx="576.2" cy="241.1" r="1.8"/>
<circle cx="571.5" cy="274.4" r="1.8"/>
<circle cx="566.7" cy="282.3" r="1.8"/>
<circle cx="566.9" cy="267.6" r="1.8"/>
<circle cx="568.3" cy="271.4" r="1.8"/>
<circle cx="573.2" cy="273.5" r="1.8"/>
<circle cx="567.8" cy="266.3" r="1.8"/>
<circle cx="567.4" cy="279.3" r="1.8"/>
<circle cx="566.0" cy="273.5" r="1.8"/>
<circle cx="572.1" cy="263.1" r="1.8"/>
<circle cx="559.9" cy="270.1" r="1.8"/>
<circle cx="569.5" cy="267.1" r="1.8"/>
<circle cx="572.5" cy="271.6" r="1.8"/>
<circle cx="562.7" cy="277.0" r="1.8"/>
<circle cx="570.6" cy="264.2" r="1.8"/>
<circle cx="573.1" cy="268.3" r="1.8"/>
<circle cx="567.7" cy="264.4" r="1.8"/>
<circle cx="565.2" cy="268.8" r="1.8"/>
<circle cx="576.4" cy="259.8" r="1.8"/>
<circle cx="562.7" cy="273.4" r="1.8"/>
<circle cx="560.5" cy="256.9" r="1.8"/>
<circle cx="571.8" cy="267.6" r="1.8"/>
<circle cx="564.4" cy="277.9" r="1.8"/>
<circle cx="571.2" cy="274.6" r="1.8"/>
<circle cx="562.2" cy="279.7" r="1.8"/>
<circle cx="560.1" cy="268.2" r="1.8"/>
<circle cx="574.2" cy="261.1" r="1.8"/>
<circle cx="569.1" cy="278.1" r="1.8"/>
<circle cx="563.4" cy="281.7" r="1.8"/>
<circle cx="559.3" cy="267.1" r="1.8"/>
<circle cx="557.9" cy="271.9" r="1.8"/>
<circle cx="556.7" cy="274.9" r="1.8"/>
<circle cx="552.0" cy="265.5" r="1.8"/>
<circle cx="562.3" cy="268.2" r="1.8"/>
<circle cx="550.7" cy="273.7" r="1.8"/>
<circle cx="564.8" cy="265.3" r="1.8"/>
<circle cx="547.7" cy="267.2" r="1.8"/>
<circle cx="555.1" cy="266.2" r="1.8"/>
<circle cx="564.4" cy="261.8" r="1.8"/>
<circle cx="563.6" cy="260.4" r="1.8"/>
<circle cx="551.3" cy="271.8" r="1.8"/>
<circle cx="562.8" cy="273.2" r="1.8"/>
<circle cx="558.1" cy="268.9" r="1.8"/>
<circle cx="560.8" cy="299.0" r="1.8"/>
<circle cx="559.1" cy="296.9" r="1.8"/>
<circle cx="562.9" cy="295.0" r="1.8"/>
<circle cx="557.9" cy="292.4" r="1.8"/>
<circle cx="559.9" cy="301.5" r="1.8"/>
<circle cx="558.3" cy="297.7" r="1.8"/>
<circle cx="569.2" cy="277.0" r="1.8"/>
<circle cx="554.4" cy="296.7" r="1.8"/>
<circle cx="562.0" cy="296.7" r="1.8"/>
<circle cx="557.8" cy="299.6" r="1.8"/>
<circle cx="561.4" cy="291.3" r="1.8"/>
<circle cx="557.2" cy="294.3" r="1.8"/>
<circle cx="558.9" cy="294.6" r="1.8"/>
<circle cx="546.4" cy="291.6" r="1.8"/>
<circle cx="554.0" cy="310.7" r="1.8"/>
<circle cx="543.2" cy="317.2" r="1.8"/>
<circle cx="548.6" cy="325.0" r="1.8"/>
<circle cx="554.4" cy="298.5" r="1.8"/>
<circle cx="554.4" cy="308.4" r="1.8"/>
<circle cx="552.7" cy="308.1" r="1.8"/>
<circle cx="549.4" cy="321.5" r="1.8"/>
<circle cx="554.2" cy="317.6" r="1.8"/>
<circle cx="553.7" cy="317.9" r="1.8"/>
<circle cx="543.9" cy="307.9" r="1.8"/>
<circle cx="552.5" cy="312.3" r="1.8"/>
<circle cx="545.9" cy="308.2" r="1.8"/>
<circle cx="542.0" cy="338.6" r="1.8"/>
<circle cx="538.4" cy="365.6" r="1.8"/>
<circle cx="534.1" cy="364.1" r="1.8"/>
<circle cx="541.6" cy="344.0" r="1.8"/>
<circle cx="539.0" cy="360.2" r="1.8"/>
<circle cx="542.5" cy="351.2" r="1.8"/>
<circle cx="532.8" cy="346.1" r="1.8"/>
<circle cx="534.6" cy="358.2" r="1.8"/>
<circle cx="543.3" cy="343.9" r="1.8"/>
<circle cx="542.0" cy="358.3" r="1.8"/>
<circle cx="541.8" cy="360.4" r="1.8"/>
<circle cx="539.3" cy="358.8" r="1.8"/>
<circle cx="504.9" cy="313.3" r="1.8"/>
<circle cx="504.3" cy="330.6" r="1.8"/>
<circle cx="509.4" cy="321.9" r="1.8"/>
<circle cx="516.7" cy="321.8" r="1.8"/>
<circle cx="513.9" cy="323.9" r="1.8"/>
<circle cx="530.5" cy="322.4" r="1.8"/>
<circle cx="521.7" cy="330.0" r="1.8"/>
<circle cx="516.6" cy="311.9" r="1.8"/>
<circle cx="514.1" cy="330.6" r="1.8"/>
<circle cx="506.5" cy="317.2" r="1.8"/>
<circle cx="525.1" cy="328.3" r="1.8"/>
<circle cx="518.1" cy="328.4" r="1.8"/>
<circle cx="519.2" cy="312.6" r="1.8"/>
<circle cx="507.1" cy="316.9" r="1.8"/>
<circle cx="524.5" cy="317.5" r="1.8"/>
<circle cx="511.7" cy="315.8" r="1.8"/>
<circle cx="507.3" cy="321.1" r="1.8"/>
<circle cx="509.7" cy="324.9" r="1.8"/>
<circle cx="501.5" cy="324.6" r="1.8"/>
<circle cx="513.5" cy="306.5" r="1.8"/>
<circle cx="523.1" cy="319.8" r="1.8"/>
<circle cx="502.4" cy="315.0" r="1.8"/>
<circle cx="520.0" cy="318.3" r="1.8"/>
<circle cx="523.5" cy="328.0" r="1.8"/>
<circle cx="522.7" cy="324.6" r="1.8"/>
<circle cx="527.3" cy="327.3" r="1.8"/>
<circle cx="502.7" cy="324.2" r="1.8"/>
<circle cx="505.4" cy="358.1" r="1.8"/>
<circle cx="498.2" cy="340.3" r="1.8"/>
<circle cx="511.6" cy="327.4" r="1.8"/>
<circle cx="502.8" cy="369.2" r="1.8"/>
<circle cx="494.4" cy="351.9" r="1.8"/>
<circle cx="511.3" cy="343.8" r="1.8"/>
<circle cx="503.4" cy="354.0" r="1.8"/>
<circle cx="494.6" cy="344.1" r="1.8"/>
<circle cx="501.8" cy="353.3" r="1.8"/>
<circle cx="499.8" cy="343.0" r="1.8"/>
<circle cx="493.9" cy="341.4" r="1.8"/>
<circle cx="505.4" cy="346.0" r="1.8"/>
<circle cx="494.9" cy="336.6" r="1.8"/>
<circle cx="516.0" cy="356.4" r="1.8"/>
<circle cx="503.8" cy="319.1" r="1.8"/>
<circle cx="503.7" cy="349.8" r="1.8"/>
<circle cx="510.1" cy="349.3" r="1.8"/>
<circle cx="499.6" cy="350.2" r="1.8"/>
<circle cx="488.3" cy="355.3" r="1.8"/>
<circle cx="501.9" cy="338.0" r="1.8"/>
<circle cx="508.0" cy="363.1" r="1.8"/>
<circle cx="513.8" cy="339.7" r="1.8"/>
<circle cx="527.3" cy="346.5" r="1.8"/>
<circle cx="521.8" cy="337.2" r="1.8"/>
<circle cx="542.0" cy="353.3" r="1.8"/>
<circle cx="515.4" cy="334.2" r="1.8"/>
<circle cx="538.6" cy="352.9" r="1.8"/>
<circle cx="539.6" cy="351.5" r="1.8"/>
<circle cx="518.0" cy="347.1" r="1.8"/>
<circle cx="507.7" cy="339.0" r="1.8"/>
<circle cx="524.5" cy="349.2" r="1.8"/>
<circle cx="499.2" cy="239.4" r="1.8"/>
<circle cx="508.7" cy="241.9" r="1.8"/>
<circle cx="510.1" cy="241.0" r="1.8"/>
<circle cx="502.4" cy="243.9" r="1.8"/>
<circle cx="505.4" cy="235.9" r="1.8"/>
<circle cx="500.0" cy="240.0" r="1.8"/>
<circle cx="544.3" cy="236.3" r="1.8"/>
<circle cx="545.0" cy="236.4" r="1.8"/>
<circle cx="544.2" cy="224.9" r="1.8"/>
<circle cx="547.5" cy="243.4" r="1.8"/>
<circle cx="547.6" cy="233.5" r="1.8"/>
<circle cx="547.7" cy="227.3" r="1.8"/>
<circle cx="533.6" cy="235.5" r="1.8"/>
<circle cx="539.4" cy="240.9" r="1.8"/>
<circle cx="523.5" cy="189.2" r="1.8"/>
<circle cx="523.8" cy="214.5" r="1.8"/>
<circle cx="527.7" cy="196.8" r="1.8"/>
<circle cx="525.4" cy="208.1" r="1.8"/>
<circle cx="533.0" cy="206.1" r="1.8"/>
<circle cx="538.9" cy="209.2" r="1.8"/>
</g>
<g font-family="'Liberation Sans',sans-serif" fill="#2b2b2b" stroke="#ffffff" stroke-width="1.3" stroke-opacity="0.6" paint-order="stroke" stroke-linejoin="round">
<text x="446.6" y="50.73" text-anchor="middle" font-size="5.29">Charleville</text>
<text x="491.6" y="53.26" text-anchor="middle" font-size="4.51">Mitchell</text>
<text x="512" y="55.18" text-anchor="middle" font-size="4.27">Roma</text>
<text x="432.9" y="98.22" text-anchor="middle" font-size="5.25">Cunnamulla</text>
<text x="507" y="97.6" text-anchor="middle" font-size="4.5">St George</text>
<text x="550.5" y="112.98" text-anchor="middle" font-size="4.54">Goondiwindi</text>
<text x="539" y="138.65" text-anchor="middle" font-size="5.05">Moree</text>
<text x="621.8" y="52.57" text-anchor="middle" font-size="4.84">Mountain</text>
<text x="621.8" y="58.25" text-anchor="middle" font-size="5.05">Creek</text>
<text x="577.7" y="59.45" text-anchor="middle" font-size="4.46">Kingaroy</text>
<text x="604.7" y="65.76" text-anchor="middle" font-size="4.51">Maleny</text>
<text x="575.4" y="72.46" text-anchor="middle" font-size="6.26">Dalby</text>
<text x="620" y="74.35" text-anchor="middle" font-size="5.94">North Lakes</text>
<text x="624" y="87.1" text-anchor="start" font-size="6.97">Brisbane</text>
<text x="589" y="90.1" text-anchor="end" font-size="6.97">Toowoomba</text>
<text x="601.7" y="98.06" text-anchor="start" font-size="6.87">Ipswich</text>
<text x="615" y="107.63" text-anchor="start" font-size="7.06">Southport</text>
<text x="635.5" y="115.99" text-anchor="middle" font-size="4.75">Byron Bay</text>
<text x="625.7" y="129.95" text-anchor="middle" font-size="5.05">South</text>
<text x="625.7" y="136.15" text-anchor="middle" font-size="5.05">Lismore</text>
<text x="594.9" y="112.06" text-anchor="middle" font-size="4.51">Warwick</text>
<text x="612" y="37.15" text-anchor="middle" font-size="5.05">Maryborough</text>
<text x="325.5" y="212.7" text-anchor="middle" font-size="5.19">Broken Hill</text>
<text x="349.4" y="226.56" text-anchor="middle" font-size="4.51">Menindee</text>
<text x="439" y="157.09" text-anchor="middle" font-size="5.18">Bourke</text>
<text x="463" y="154.49" text-anchor="middle" font-size="4.59">Brewarrina</text>
<text x="436.7" y="199.14" text-anchor="middle" font-size="5.03">Cobar</text>
<text x="471.7" y="201.14" text-anchor="middle" font-size="5.31">Nyngan</text>
<text x="487.7" y="214.76" text-anchor="middle" font-size="4.51">Warren</text>
<text x="482" y="226.18" text-anchor="middle" font-size="5.27">Narromine</text>
<text x="511.7" y="226.95" text-anchor="start" font-size="6.21">Dubbo</text>
<text x="527.7" y="214.76" text-anchor="middle" font-size="4.51">Dunedoo</text>
<text x="508.3" y="237.26" text-anchor="start" font-size="5.7">Mudgee</text>
<text x="538" y="164.69" text-anchor="middle" font-size="4.75">Narrabri</text>
<text x="550.3" y="183.69" text-anchor="middle" font-size="4.75">Gunnedah</text>
<text x="453.4" y="251.77" text-anchor="middle" font-size="4.96">Condobolin</text>
<text x="474.7" y="253.55" text-anchor="start" font-size="5.65">Parkes</text>
<text x="510.6" y="252.8" text-anchor="start" font-size="5.82">Orange</text>
<text x="570.9" y="148.59" text-anchor="middle" font-size="4.47">Inverell</text>
<text x="586.9" y="156.25" text-anchor="middle" font-size="4.34">Glen Innes</text>
<text x="616.6" y="145.15" text-anchor="middle" font-size="5.05">Grafton</text>
<text x="608" y="164.89" text-anchor="middle" font-size="5.53">Coffs</text>
<text x="608" y="171.95" text-anchor="middle" font-size="5.7">Harbour</text>
<text x="585.3" y="169.84" text-anchor="middle" font-size="4.46">Armidale</text>
<text x="633" y="176.26" text-anchor="middle" font-size="4.54">Nambucca</text>
<text x="633.7" y="181.65" text-anchor="middle" font-size="5.05">Heads</text>
<text x="566.3" y="196.67" text-anchor="middle" font-size="5.12">Tamworth</text>
<text x="628" y="189.09" text-anchor="middle" font-size="4.75">South</text>
<text x="628" y="194.62" text-anchor="middle" font-size="4.53">Kempsey</text>
<text x="598.3" y="199.06" text-anchor="middle" font-size="6.0">Port</text>
<text x="598.3" y="206.1" text-anchor="middle" font-size="6.1">Macquarie</text>
<text x="609.7" y="216.22" text-anchor="start" font-size="4.84">Taree</text>
<text x="610.9" y="224.76" text-anchor="start" font-size="5.71">Forster</text>
<text x="591.4" y="230.82" text-anchor="start" font-size="4.25">Dungog</text>
<text x="565" y="221.9" text-anchor="middle" font-size="5.97">Muswellbrook</text>
<text x="577.7" y="239.49" text-anchor="middle" font-size="5.92">Cessnock</text>
<text x="592.1" y="248.09" text-anchor="start" font-size="6.94">Newcastle</text>
<text x="566.4" y="255.71" text-anchor="middle" font-size="4.64">Blue Haven</text>
<text x="543.3" y="255.54" text-anchor="middle" font-size="4.16">Portland</text>
<text x="226.3" y="221.25" text-anchor="start" font-size="5.05">Aug</text>
<text x="227" y="226.95" text-anchor="start" font-size="5.05">West</text>
<text x="226.3" y="245.25" text-anchor="start" font-size="5.05">alla</text>
<text x="239" y="259.13" text-anchor="middle" font-size="4.3">Port Pirie</text>
<text x="254.3" y="296.3" text-anchor="middle" font-size="6.22">Elizabeth</text>
<text x="248.9" y="309.12" text-anchor="end" font-size="6.83">Adelaide</text>
<text x="248.9" y="324.29" text-anchor="middle" font-size="4.62">Aldinga</text>
<text x="248.9" y="330.25" text-anchor="middle" font-size="5.05">Beach</text>
<text x="272.9" y="311.45" text-anchor="start" font-size="5.82">Murray</text>
<text x="272.9" y="318.17" text-anchor="start" font-size="4.77">Bridge</text>
<text x="312" y="305.06" text-anchor="middle" font-size="4.77">Murray-Sunset</text>
<text x="342.5" y="281.03" text-anchor="middle" font-size="7.01">Mildura</text>
<text x="379" y="293.69" text-anchor="middle" font-size="4.75">Balranald</text>
<text x="355" y="301.52" text-anchor="middle" font-size="3.84">Robinvale</text>
<text x="347" y="317.57" text-anchor="middle" font-size="4.82">Ouyen</text>
<text x="366" y="316.6" text-anchor="start" font-size="5.82">Swan Hill</text>
<text x="350" y="327.05" text-anchor="middle" font-size="4.07">Sea Lake</text>
<text x="335.7" y="333.69" text-anchor="middle" font-size="4.75">Hopetoun</text>
<text x="349.4" y="345.18" text-anchor="middle" font-size="5.13">Warracknabeal</text>
<text x="291.5" y="352.18" text-anchor="middle" font-size="5.26">Bordertown</text>
<text x="320.9" y="352.27" text-anchor="middle" font-size="4.11">Nhill</text>
<text x="354.5" y="356.83" text-anchor="middle" font-size="5.14">Dimboola</text>
<text x="329" y="365.11" text-anchor="middle" font-size="5.79">Horsham</text>
<text x="411.6" y="290.05" text-anchor="middle" font-size="4.78">Hay</text>
<text x="451" y="289.25" text-anchor="middle" font-size="5.05">Griffith</text>
<text x="439.2" y="297.89" text-anchor="middle" font-size="5.59">Leeton</text>
<text x="458" y="274.65" text-anchor="middle" font-size="5.05">West</text>
<text x="458" y="280.65" text-anchor="middle" font-size="5.05">Wyalong</text>
<text x="491.8" y="267.19" text-anchor="middle" font-size="5.75">Forbes</text>
<text x="498" y="275.01" text-anchor="middle" font-size="5.54">Cowra</text>
<text x="499" y="284.91" text-anchor="middle" font-size="5.54">Young</text>
<text x="479.7" y="288.84" text-anchor="middle" font-size="5.16">Temora</text>
<text x="521" y="292.8" text-anchor="middle" font-size="4.05">Boorowa</text>
<text x="479.7" y="301.25" text-anchor="middle" font-size="4.62">Junee</text>
<text x="532.3" y="304.36" text-anchor="end" font-size="6.39">Goulburn</text>
<text x="461.4" y="311.64" text-anchor="middle" font-size="6.93">Wagga</text>
<text x="461.4" y="319.24" text-anchor="middle" font-size="6.93">Wagga</text>
<text x="491" y="317.03" text-anchor="middle" font-size="3.85">Gundagai</text>
<text x="521" y="313.87" text-anchor="middle" font-size="7.0">Canberra</text>
<text x="458" y="327.02" text-anchor="middle" font-size="4.67">Henty</text>
<text x="486" y="327.34" text-anchor="middle" font-size="4.43">Batlow</text>
<text x="476" y="335.01" text-anchor="middle" font-size="4.64">Tumbarumba</text>
<text x="386" y="327.79" text-anchor="start" font-size="6.2">Deniliquin</text>
<text x="430.6" y="325.83" text-anchor="middle" font-size="5.14">Finley</text>
<text x="406" y="336.56" text-anchor="middle" font-size="4.51">Cohuna</text>
<text x="441.3" y="337.59" text-anchor="middle" font-size="5.02">Yarrawonga</text>
<text x="405.4" y="347.25" text-anchor="end" font-size="5.67">Echuca</text>
<text x="467.8" y="345.93" text-anchor="start" font-size="6.63">Albury</text>
<text x="429.9" y="356.06" text-anchor="start" font-size="6.98">Shepparton</text>
<text x="397.2" y="360.96" text-anchor="middle" font-size="6.84">Bendigo</text>
<text x="520.9" y="344.37" text-anchor="middle" font-size="5.15">Cooma</text>
<text x="506" y="360.96" text-anchor="middle" font-size="4.65">Jindabyne</text>
<text x="581" y="263.18" text-anchor="start" font-size="6.33">Gosford</text>
<text x="557.8" y="268.1" text-anchor="end" font-size="6.24">Richmond</text>
<text x="577.7" y="277.06" text-anchor="start" font-size="6.87">Sydney</text>
<text x="559.4" y="283.35" text-anchor="end" font-size="6.8">Campbelltown</text>
<text x="566" y="300.34" text-anchor="middle" font-size="7.09">Wollongong</text>
<text x="558.3" y="312.44" text-anchor="middle" font-size="5.78">Nowra</text>
<text x="558.3" y="322.15" text-anchor="start" font-size="5.94">Ulladulla</text>
<text x="549" y="328.65" text-anchor="middle" font-size="3.76">Bermagui</text>
<text x="548" y="353.76" text-anchor="middle" font-size="4.51">Narooma</text>
<text x="548.5" y="362.99" text-anchor="start" font-size="4.75">Bega</text>
<text x="290.8" y="372.56" text-anchor="middle" font-size="5.2">Naracoorte</text>
<text x="321.5" y="380.27" text-anchor="middle" font-size="4.52">Edenhope</text>
<text x="297.3" y="388.24" text-anchor="middle" font-size="4.87">Millicent</text>
<text x="308.3" y="407.56" text-anchor="middle" font-size="6.01">Mount</text>
<text x="308.3" y="414.73" text-anchor="middle" font-size="6.21">Gambier</text>
<text x="339.6" y="393.52" text-anchor="middle" font-size="5.98">Hamilton</text>
<text x="342.3" y="410.55" text-anchor="middle" font-size="4.49">Heywood</text>
<text x="351.5" y="426.29" text-anchor="middle" font-size="6.2">Warrnambool</text>
<text x="359.3" y="370.46" text-anchor="middle" font-size="5.83">Stawell</text>
<text x="350.6" y="383.48" text-anchor="middle" font-size="5.88">Ararat</text>
<text x="381.5" y="435.06" text-anchor="middle" font-size="4.51">Apollo Bay</text>
<text x="389.4" y="419.26" text-anchor="middle" font-size="4.51">Lorne</text>
<text x="422.6" y="375.21" text-anchor="start" font-size="6.0">Seymour</text>
<text x="439" y="366.65" text-anchor="middle" font-size="5.05">Euroa</text>
<text x="464.4" y="370.89" text-anchor="middle" font-size="4.75">Bright</text>
<text x="481.5" y="381.88" text-anchor="middle" font-size="4.44">Omeo</text>
<text x="511.7" y="371.11" text-anchor="middle" font-size="4.64">Bombala</text>
<text x="545" y="376.45" text-anchor="start" font-size="5.05">Eden</text>
<text x="536" y="387.08" text-anchor="middle" font-size="4.55">Mallacoota</text>
<text x="398.6" y="386.0" text-anchor="end" font-size="6.78">Ballarat</text>
<text x="408.9" y="389.93" text-anchor="start" font-size="6.19">Gisborne</text>
<text x="410.7" y="401.27" text-anchor="end" font-size="7.0">Melbourne</text>
<text x="440.2" y="399.95" text-anchor="middle" font-size="6.96">Ferntree</text>
<text x="440.2" y="407.58" text-anchor="middle" font-size="6.5">Gully</text>
<text x="396.3" y="412.02" text-anchor="end" font-size="7.14">Geelong</text>
<text x="419.1" y="418.23" text-anchor="middle" font-size="6.9">Frankston</text>
<text x="451" y="420.05" text-anchor="middle" font-size="5.66">Morwell</text>
<text x="467.8" y="403.95" text-anchor="middle" font-size="5.7">Sale</text>
<text x="486.6" y="401.03" text-anchor="start" font-size="5.9">Bairnsdale</text>
<text x="430.6" y="431.12" text-anchor="middle" font-size="5.37">Wonthaggi</text>
</g>
<circle cx="447.3" cy="53.9" r="1.65" fill="#fff" stroke="#111" stroke-width="1.25"/>
<circle cx="491.6" cy="56.2" r="1.25" fill="#fff" stroke="#444" stroke-width="0.6"/>
<circle cx="512.2" cy="58" r="1.65" fill="#e0a040" stroke="#111" stroke-width="1.25"/>
<circle cx="432.9" cy="101" r="1.65" fill="#e0a040" stroke="#111" stroke-width="1.25"/>
<circle cx="507.1" cy="100.3" r="1.25" fill="#fff" stroke="#444" stroke-width="0.6"/>
<circle cx="551" cy="115" r="1.25" fill="#fff" stroke="#444" stroke-width="0.6"/>
<circle cx="539.1" cy="141.4" r="1.65" fill="#fff" stroke="#111" stroke-width="1.25"/>
<circle cx="622.3" cy="61.4" r="1.65" fill="#fff" stroke="#111" stroke-width="1.25"/>
<circle cx="590.3" cy="57.5" r="1.25" fill="#fff" stroke="#444" stroke-width="0.6"/>
<circle cx="616" cy="63.7" r="1.25" fill="#fff" stroke="#444" stroke-width="0.6"/>
<circle cx="575" cy="75.6" r="1.65" fill="#fff" stroke="#111" stroke-width="1.25"/>
<circle cx="620" cy="77" r="1.65" fill="#fff" stroke="#111" stroke-width="1.25"/>
<circle cx="620" cy="83.6" r="1.65" fill="#fff" stroke="#111" stroke-width="1.25"/>
<circle cx="592.6" cy="86.6" r="1.65" fill="#fff" stroke="#111" stroke-width="1.25"/>
<circle cx="613" cy="87.7" r="1.65" fill="#fff" stroke="#111" stroke-width="1.25"/>
<circle cx="630.3" cy="97.5" r="1.65" fill="#fff" stroke="#111" stroke-width="1.25"/>
<circle cx="625.7" cy="123" r="1.65" fill="#fff" stroke="#111" stroke-width="1.25"/>
<circle cx="594.9" cy="105.3" r="1.25" fill="#fff" stroke="#444" stroke-width="0.6"/>
<circle cx="325.2" cy="215.5" r="1.65" fill="#fff" stroke="#111" stroke-width="1.25"/>
<circle cx="349.4" cy="229" r="1.25" fill="#fff" stroke="#444" stroke-width="0.6"/>
<circle cx="439.7" cy="160" r="1.65" fill="#fff" stroke="#111" stroke-width="1.25"/>
<circle cx="463" cy="157" r="1.25" fill="#fff" stroke="#444" stroke-width="0.6"/>
<circle cx="436.7" cy="202.3" r="1.65" fill="#e0a040" stroke="#111" stroke-width="1.25"/>
<circle cx="471.3" cy="204.1" r="1.65" fill="#e0a040" stroke="#111" stroke-width="1.25"/>
<circle cx="487.7" cy="208" r="1.25" fill="#fff" stroke="#444" stroke-width="0.6"/>
<circle cx="498.5" cy="224" r="1.65" fill="#fff" stroke="#111" stroke-width="1.25"/>
<circle cx="507.1" cy="224" r="1.65" fill="#fff" stroke="#111" stroke-width="1.25"/>
<circle cx="527.7" cy="217.6" r="1.25" fill="#fff" stroke="#444" stroke-width="0.6"/>
<circle cx="533" cy="234.7" r="1.65" fill="#fff" stroke="#111" stroke-width="1.25"/>
<circle cx="537.3" cy="167.3" r="1.25" fill="#fff" stroke="#444" stroke-width="0.6"/>
<circle cx="549" cy="186.3" r="1.25" fill="#fff" stroke="#444" stroke-width="0.6"/>
<circle cx="470.6" cy="249.6" r="1.65" fill="#fff" stroke="#111" stroke-width="1.25"/>
<circle cx="496.9" cy="251" r="1.65" fill="#fff" stroke="#111" stroke-width="1.25"/>
<circle cx="522" cy="255" r="1.65" fill="#fff" stroke="#111" stroke-width="1.25"/>
<circle cx="570.9" cy="151.3" r="1.25" fill="#fff" stroke="#444" stroke-width="0.6"/>
<circle cx="587.3" cy="149.7" r="1.65" fill="#e0a040" stroke="#111" stroke-width="1.25"/>
<circle cx="617.7" cy="148" r="1.25" fill="#fff" stroke="#444" stroke-width="0.6"/>
<circle cx="622.7" cy="166.2" r="1.65" fill="#fff" stroke="#111" stroke-width="1.25"/>
<circle cx="585.7" cy="173" r="1.65" fill="#e0a040" stroke="#111" stroke-width="1.25"/>
<circle cx="619.5" cy="176.5" r="1.25" fill="#fff" stroke="#444" stroke-width="0.6"/>
<circle cx="566.7" cy="189.7" r="1.65" fill="#fff" stroke="#111" stroke-width="1.25"/>
<circle cx="615.4" cy="189.7" r="1.25" fill="#fff" stroke="#444" stroke-width="0.6"/>
<circle cx="617.3" cy="200" r="1.65" fill="#e0a040" stroke="#111" stroke-width="1.25"/>
<circle cx="605.8" cy="214.4" r="1.65" fill="#e0a040" stroke="#111" stroke-width="1.25"/>
<circle cx="607" cy="222.4" r="1.65" fill="#e0a040" stroke="#111" stroke-width="1.25"/>
<circle cx="588" cy="229" r="1.25" fill="#fff" stroke="#444" stroke-width="0.6"/>
<circle cx="565.6" cy="225.1" r="1.65" fill="#fff" stroke="#111" stroke-width="1.25"/>
<circle cx="577.7" cy="242.7" r="1.65" fill="#fff" stroke="#111" stroke-width="1.25"/>
<circle cx="588" cy="244.6" r="1.65" fill="#e0a040" stroke="#111" stroke-width="1.25"/>
<circle cx="581.9" cy="254" r="1.25" fill="#fff" stroke="#444" stroke-width="0.6"/>
<circle cx="542.3" cy="258.2" r="1.25" fill="#fff" stroke="#444" stroke-width="0.6"/>
<circle cx="231" cy="231.5" r="1.65" fill="#e0a040" stroke="#111" stroke-width="1.25"/>
<circle cx="227" cy="248" r="1.65" fill="#e0a040" stroke="#111" stroke-width="1.25"/>
<circle cx="237.4" cy="251.9" r="1.65" fill="#fff" stroke="#111" stroke-width="1.25"/>
<circle cx="254.6" cy="299.3" r="1.65" fill="#fff" stroke="#111" stroke-width="1.25"/>
<circle cx="252.3" cy="306.6" r="1.65" fill="#fff" stroke="#111" stroke-width="1.25"/>
<circle cx="248.9" cy="317.3" r="2.1" fill="#c08a3a" stroke="#7a5520" stroke-width="1"/>
<circle cx="270.1" cy="312.3" r="1.65" fill="#fff" stroke="#111" stroke-width="1.25"/>
<circle cx="330" cy="303" r="1.25" fill="#fff" stroke="#444" stroke-width="0.6"/>
<circle cx="342.1" cy="283.7" r="1.65" fill="#e0a040" stroke="#111" stroke-width="1.25"/>
<circle cx="378.7" cy="297.4" r="1.65" fill="#fff" stroke="#111" stroke-width="1.25"/>
<circle cx="358.6" cy="295.6" r="1.25" fill="#fff" stroke="#444" stroke-width="0.6"/>
<circle cx="347" cy="310.7" r="1.65" fill="#fff" stroke="#111" stroke-width="1.25"/>
<circle cx="378.7" cy="319.6" r="1.65" fill="#fff" stroke="#111" stroke-width="1.25"/>
<circle cx="360.9" cy="325.3" r="1.25" fill="#fff" stroke="#444" stroke-width="0.6"/>
<circle cx="348.3" cy="331.7" r="1.25" fill="#fff" stroke="#444" stroke-width="0.6"/>
<circle cx="349.4" cy="348.2" r="1.65" fill="#fff" stroke="#111" stroke-width="1.25"/>
<circle cx="307.8" cy="350" r="1.65" fill="#fff" stroke="#111" stroke-width="1.25"/>
<circle cx="330" cy="350.5" r="1.65" fill="#fff" stroke="#111" stroke-width="1.25"/>
<circle cx="339.8" cy="354.6" r="1.65" fill="#fff" stroke="#111" stroke-width="1.25"/>
<circle cx="344.9" cy="362.6" r="1.65" fill="#fff" stroke="#111" stroke-width="1.25"/>
<circle cx="411.6" cy="293.3" r="1.65" fill="#fff" stroke="#111" stroke-width="1.25"/>
<circle cx="442" cy="287.1" r="1.65" fill="#fff" stroke="#111" stroke-width="1.25"/>
<circle cx="451.6" cy="295.6" r="1.65" fill="#fff" stroke="#111" stroke-width="1.25"/>
<circle cx="472.2" cy="275.7" r="1.65" fill="#fff" stroke="#111" stroke-width="1.25"/>
<circle cx="491.8" cy="258.6" r="1.65" fill="#fff" stroke="#111" stroke-width="1.25"/>
<circle cx="509.4" cy="272.7" r="1.65" fill="#fff" stroke="#111" stroke-width="1.25"/>
<circle cx="499.6" cy="287.8" r="1.65" fill="#fff" stroke="#111" stroke-width="1.25"/>
<circle cx="480.4" cy="291.7" r="1.65" fill="#fff" stroke="#111" stroke-width="1.25"/>
<circle cx="510" cy="291" r="1.25" fill="#fff" stroke="#444" stroke-width="0.6"/>
<circle cx="482" cy="304.3" r="1.65" fill="#fff" stroke="#111" stroke-width="1.25"/>
<circle cx="535.7" cy="301.5" r="1.65" fill="#fff" stroke="#111" stroke-width="1.25"/>
<circle cx="476.3" cy="311.6" r="1.65" fill="#fff" stroke="#111" stroke-width="1.25"/>
<circle cx="495.3" cy="310.5" r="1.25" fill="#fff" stroke="#444" stroke-width="0.6"/>
<circle cx="522" cy="316.9" r="2.1" fill="#c08a3a" stroke="#7a5520" stroke-width="1"/>
<circle cx="467" cy="324.9" r="1.25" fill="#fff" stroke="#444" stroke-width="0.6"/>
<circle cx="495.7" cy="325.3" r="1.25" fill="#fff" stroke="#444" stroke-width="0.6"/>
<circle cx="492.3" cy="332.9" r="1.25" fill="#fff" stroke="#444" stroke-width="0.6"/>
<circle cx="415.3" cy="325.3" r="1.65" fill="#e0a040" stroke="#111" stroke-width="1.25"/>
<circle cx="430.6" cy="328.7" r="1.65" fill="#fff" stroke="#111" stroke-width="1.25"/>
<circle cx="396.3" cy="334.5" r="1.25" fill="#fff" stroke="#444" stroke-width="0.6"/>
<circle cx="441.3" cy="340.4" r="1.65" fill="#fff" stroke="#111" stroke-width="1.25"/>
<circle cx="409.3" cy="344.7" r="1.65" fill="#fff" stroke="#111" stroke-width="1.25"/>
<circle cx="464.4" cy="342" r="1.65" fill="#fff" stroke="#111" stroke-width="1.25"/>
<circle cx="426" cy="352.3" r="1.65" fill="#fff" stroke="#111" stroke-width="1.25"/>
<circle cx="397.2" cy="363.6" r="1.65" fill="#fff" stroke="#111" stroke-width="1.25"/>
<circle cx="520.9" cy="347.7" r="1.65" fill="#fff" stroke="#111" stroke-width="1.25"/>
<circle cx="507.8" cy="353.4" r="1.65" fill="#fff" stroke="#111" stroke-width="1.25"/>
<circle cx="577" cy="260.4" r="1.65" fill="#fff" stroke="#111" stroke-width="1.25"/>
<circle cx="562.2" cy="265.4" r="1.65" fill="#fff" stroke="#111" stroke-width="1.25"/>
<circle cx="573.6" cy="274" r="2.1" fill="#c08a3a" stroke="#7a5520" stroke-width="1"/>
<circle cx="563.5" cy="280.3" r="1.65" fill="#fff" stroke="#111" stroke-width="1.25"/>
<circle cx="565.6" cy="290.6" r="1.65" fill="#e0a040" stroke="#111" stroke-width="1.25"/>
<circle cx="558.7" cy="304.7" r="1.65" fill="#fff" stroke="#111" stroke-width="1.25"/>
<circle cx="554.9" cy="319.8" r="1.65" fill="#e0a040" stroke="#111" stroke-width="1.25"/>
<circle cx="548.5" cy="331.7" r="1.25" fill="#fff" stroke="#444" stroke-width="0.6"/>
<circle cx="546.4" cy="347.3" r="1.65" fill="#e0a040" stroke="#111" stroke-width="1.25"/>
<circle cx="544" cy="361" r="1.65" fill="#e0a040" stroke="#111" stroke-width="1.25"/>
<circle cx="306.7" cy="370.4" r="1.65" fill="#fff" stroke="#111" stroke-width="1.25"/>
<circle cx="321.5" cy="373.1" r="1.25" fill="#fff" stroke="#444" stroke-width="0.6"/>
<circle cx="297.3" cy="391" r="1.65" fill="#fff" stroke="#111" stroke-width="1.25"/>
<circle cx="307.8" cy="398.3" r="1.65" fill="#e0a040" stroke="#111" stroke-width="1.25"/>
<circle cx="340.3" cy="396" r="1.65" fill="#fff" stroke="#111" stroke-width="1.25"/>
<circle cx="330" cy="408.6" r="1.25" fill="#fff" stroke="#444" stroke-width="0.6"/>
<circle cx="351" cy="416.6" r="1.65" fill="#fff" stroke="#111" stroke-width="1.25"/>
<circle cx="359.3" cy="373.6" r="1.65" fill="#fff" stroke="#111" stroke-width="1.25"/>
<circle cx="363.1" cy="381.1" r="1.65" fill="#fff" stroke="#111" stroke-width="1.25"/>
<circle cx="382" cy="428.7" r="1.25" fill="#fff" stroke="#444" stroke-width="0.6"/>
<circle cx="389.4" cy="421.6" r="1.25" fill="#fff" stroke="#444" stroke-width="0.6"/>
<circle cx="419.1" cy="372.7" r="1.65" fill="#fff" stroke="#111" stroke-width="1.25"/>
<circle cx="430.6" cy="364" r="1.65" fill="#fff" stroke="#111" stroke-width="1.25"/>
<circle cx="466" cy="364" r="1.65" fill="#fff" stroke="#111" stroke-width="1.25"/>
<circle cx="482" cy="375" r="1.25" fill="#fff" stroke="#444" stroke-width="0.6"/>
<circle cx="523.8" cy="369" r="1.25" fill="#fff" stroke="#444" stroke-width="0.6"/>
<circle cx="540.3" cy="374.3" r="1.65" fill="#fff" stroke="#111" stroke-width="1.25"/>
<circle cx="536.9" cy="389.6" r="1.25" fill="#fff" stroke="#444" stroke-width="0.6"/>
<circle cx="387" cy="389.6" r="1.65" fill="#fff" stroke="#111" stroke-width="1.25"/>
<circle cx="405" cy="386.9" r="1.65" fill="#fff" stroke="#111" stroke-width="1.25"/>
<circle cx="414.6" cy="397.8" r="1.65" fill="#fff" stroke="#111" stroke-width="1.25"/>
<circle cx="422.6" cy="399.4" r="1.65" fill="#fff" stroke="#111" stroke-width="1.25"/>
<circle cx="399.3" cy="407.9" r="1.65" fill="#e0a040" stroke="#111" stroke-width="1.25"/>
<circle cx="418.7" cy="407.9" r="1.65" fill="#fff" stroke="#111" stroke-width="1.25"/>
<circle cx="451.6" cy="411.5" r="1.65" fill="#e0a040" stroke="#111" stroke-width="1.25"/>
<circle cx="468.3" cy="407.4" r="1.65" fill="#fff" stroke="#111" stroke-width="1.25"/>
<circle cx="482.7" cy="398.3" r="1.65" fill="#fff" stroke="#111" stroke-width="1.25"/>
<circle cx="430.6" cy="423.4" r="1.65" fill="#fff" stroke="#111" stroke-width="1.25"/>
<g font-family="'Liberation Sans',sans-serif" font-weight="bold" fill="#6e6e6e" stroke="#fff" stroke-width="1.2" stroke-opacity="0.6" paint-order="stroke" text-anchor="middle" font-size="6.3">
<text x="447.7" y="234.2" textLength="38.8">New South</text>
<text x="447.7" y="240.8" textLength="20.6">Wales</text>
<text x="393.4" y="374.9" textLength="28.7">Victoria</text>
<text x="582.1" y="349.6" textLength="38.4">Australian</text>
<text x="582.3" y="356.4" textLength="26.5">Capital</text>
<text x="582.3" y="363.2" textLength="33">Territory</text>
</g>
<text x="437.5" y="448.8" font-family="'Liberation Sans',sans-serif" font-style="italic" font-size="6.6" fill="#6484ab" text-anchor="middle" textLength="29.7">Bass Strait</text>
<g font-family="'Liberation Sans',sans-serif" fill="#4d7a45" font-size="5.95" text-anchor="middle" stroke="#fff" stroke-width="0.9" stroke-opacity="0.4" paint-order="stroke">
<text x="283.3" y="47.4" font-size="5.8" text-anchor="end">Simpson Desert</text><text x="290" y="54.8" font-size="5.9" text-anchor="end">Conservation Park</text>
<text x="301.4" y="92.8">Innamincka</text><text x="301" y="100">Regional</text><text x="301" y="106.4">Reserve</text>
<text x="284.6" y="131">Strzelecki</text><text x="284" y="138">Regional</text><text x="284" y="145">Reserve</text>
<text x="238.6" y="80.7" text-anchor="end" font-size="5.9">Desert</text><text x="238.6" y="88.1" text-anchor="end" font-size="5.9">Reserve</text>
<text x="250" y="196.8" text-anchor="end" font-size="5.85">Lake Torrens</text><text x="251" y="203.2" text-anchor="end" font-size="5.9">National Park</text>
</g>
<path d="M301.4 81C302.59999999999997 82.4 303.79999999999995 84 303.59999999999997 85.2C303.4 86.4 299.4 86.4 299.2 85.2C299.0 84 300.2 82.4 301.4 81Z" fill="#2f5e33"/><rect x="301.0" y="85.6" width="0.8" height="1.6" fill="#2f5e33"/>
<path d="M284.3 119.2C285.5 120.60000000000001 286.7 122.2 286.5 123.4C286.3 124.60000000000001 282.3 124.60000000000001 282.1 123.4C281.90000000000003 122.2 283.1 120.60000000000001 284.3 119.2Z" fill="#2f5e33"/><rect x="283.90000000000003" y="123.8" width="0.8" height="1.6" fill="#2f5e33"/>
<path d="M234 184C235.2 185.4 236.4 187 236.2 188.2C236 189.4 232 189.4 231.8 188.2C231.6 187 232.8 185.4 234 184Z" fill="#2f5e33"/><rect x="233.6" y="188.6" width="0.8" height="1.6" fill="#2f5e33"/>
<path d="M235 47C236.2 48.4 237.4 50 237.2 51.2C237 52.4 233 52.4 232.8 51.2C232.6 50 233.8 48.4 235 47Z" fill="#2f5e33"/><rect x="234.6" y="51.6" width="0.8" height="1.6" fill="#2f5e33"/>
<circle cx="487.4" cy="259.1" r="47.2" fill="#ff0000" fill-opacity="0.4" stroke="#ff2a2a" stroke-opacity="0.8" stroke-width="1"/>
<path d="M243.5 104V216" stroke="#fff" stroke-opacity="0.85" stroke-width="1.4"/>
<path d="M241.5 108H245.5" stroke="#ddd" stroke-opacity="0.9" stroke-width="0.6"/>
<path d="M241.5 114H245.5" stroke="#ddd" stroke-opacity="0.9" stroke-width="0.6"/>
<path d="M241.5 120H245.5" stroke="#ddd" stroke-opacity="0.9" stroke-width="0.6"/>
<path d="M241.5 126H245.5" stroke="#ddd" stroke-opacity="0.9" stroke-width="0.6"/>
<path d="M241.5 132H245.5" stroke="#ddd" stroke-opacity="0.9" stroke-width="0.6"/>
<path d="M241.5 138H245.5" stroke="#ddd" stroke-opacity="0.9" stroke-width="0.6"/>
<path d="M241.5 144H245.5" stroke="#ddd" stroke-opacity="0.9" stroke-width="0.6"/>
<path d="M241.5 150H245.5" stroke="#ddd" stroke-opacity="0.9" stroke-width="0.6"/>
<path d="M241.5 156H245.5" stroke="#ddd" stroke-opacity="0.9" stroke-width="0.6"/>
<path d="M241.5 162H245.5" stroke="#ddd" stroke-opacity="0.9" stroke-width="0.6"/>
<path d="M241.5 168H245.5" stroke="#ddd" stroke-opacity="0.9" stroke-width="0.6"/>
<path d="M241.5 174H245.5" stroke="#ddd" stroke-opacity="0.9" stroke-width="0.6"/>
<path d="M241.5 180H245.5" stroke="#ddd" stroke-opacity="0.9" stroke-width="0.6"/>
<path d="M241.5 186H245.5" stroke="#ddd" stroke-opacity="0.9" stroke-width="0.6"/>
<path d="M241.5 192H245.5" stroke="#ddd" stroke-opacity="0.9" stroke-width="0.6"/>
<path d="M241.5 198H245.5" stroke="#ddd" stroke-opacity="0.9" stroke-width="0.6"/>
<path d="M241.5 204H245.5" stroke="#ddd" stroke-opacity="0.9" stroke-width="0.6"/>
<path d="M241.5 210H245.5" stroke="#ddd" stroke-opacity="0.9" stroke-width="0.6"/>
<rect x="238.6" y="160.4" width="9.6" height="4.6" rx="1.2" fill="#2b2b2b"/><rect x="240" y="161.8" width="6.8" height="1.3" fill="#fff"/>
<circle cx="243.2" cy="46.7" r="5.3" fill="url(#btn)" stroke="#444" stroke-width="0.5"/><path d="M241.0 47.7L243.2 45.5L245.39999999999998 47.7" stroke="#fff" stroke-width="1.5" fill="none" stroke-linecap="round" stroke-linejoin="round"/>
<circle cx="236.8" cy="57.6" r="5.3" fill="url(#btn)" stroke="#444" stroke-width="0.5"/><path d="M237.8 55.4L235.60000000000002 57.6L237.8 59.800000000000004" stroke="#fff" stroke-width="1.5" fill="none" stroke-linecap="round" stroke-linejoin="round"/>
<circle cx="249.5" cy="57.6" r="5.3" fill="url(#btn)" stroke="#444" stroke-width="0.5"/><path d="M248.5 55.4L250.7 57.6L248.5 59.800000000000004" stroke="#fff" stroke-width="1.5" fill="none" stroke-linecap="round" stroke-linejoin="round"/>
<circle cx="243.2" cy="68.7" r="5.3" fill="url(#btn)" stroke="#444" stroke-width="0.5"/><path d="M241.0 67.7L243.2 69.9L245.39999999999998 67.7" stroke="#fff" stroke-width="1.5" fill="none" stroke-linecap="round" stroke-linejoin="round"/>
<circle cx="243.2" cy="83.8" r="4.3" fill="#eef0ee" stroke="#2c2c2c" stroke-width="1.5" stroke-dasharray="2.2,0.5"/>
<circle cx="243.2" cy="97.5" r="5.3" fill="url(#btn)" stroke="#444" stroke-width="0.5"/><path d="M240.79999999999998 97.5H245.6M243.2 95.1V99.9" stroke="#fff" stroke-width="1.5" fill="none" stroke-linecap="round" stroke-linejoin="round"/>
<circle cx="243.5" cy="221.7" r="5.3" fill="url(#btn)" stroke="#444" stroke-width="0.5"/><path d="M240.9 221.7H246.1" stroke="#fff" stroke-width="1.5" fill="none" stroke-linecap="round" stroke-linejoin="round"/>
<rect x="239.6" y="231.8" width="5.8" height="5.8" fill="#fff" fill-opacity="0.8" stroke="#555" stroke-width="0.7"/><path d="M242.5 231.8V237.6" stroke="#555" stroke-width="0.5"/>
<text x="228" y="473.3" font-family="'Liberation Serif',serif" font-size="10.2" fill="#fbfbfb" stroke="#8798ae" stroke-width="0.7" paint-order="stroke" textLength="32.4" lengthAdjust="spacingAndGlyphs">Google</text>
<rect x="568" y="443" width="130" height="26.5" fill="#5580ad" fill-opacity="0.72"/>
<path d="M573.8 448.3V463.9M573.8 456H619.4M602.9 448.3V456M619.4 456V463.9" stroke="#f2f2f2" stroke-width="1" fill="none"/>
<g font-family="'Liberation Sans',sans-serif" font-size="5.9" fill="#dfe8f2">
<text x="588.6" y="454" text-anchor="middle">100 km</text><text x="596.7" y="462.4" text-anchor="middle">100 mi</text>
<text x="646.5" y="454.1" textLength="41.5">Lon: 142.00646</text><text x="646.5" y="461.3" textLength="39.5">Lat: -32.96495</text>
</g>
</g>
<rect x="226" y="34" width="1.2" height="439" fill="#dfe6ee" opacity="0.7"/>
</svg>
<!-- copyright strip -->
<div class="abs" style="left:226px;top:473.6px;width:472px;height:7.6px;background:#f6f6f6"></div>
<div class="t" style="right:3px;top:473.6px;font-size:5.9px;color:#111;line-height:8px">Map data ©2012 GBRMPA, Google, Whereis(R), Sensis Pty Ltd</div>
<!-- frame -->
<div class="abs" style="left:0;top:481.2px;width:700px;height:1.8px;background:#333"></div>
<div class="abs" style="left:697.6px;top:1.5px;width:0.9px;height:480px;background:#444"></div>
<div class="abs" style="left:696.2px;top:34px;width:1.4px;height:439.6px;background:#c3d4ea;opacity:0.7"></div>
</div></body></html>
